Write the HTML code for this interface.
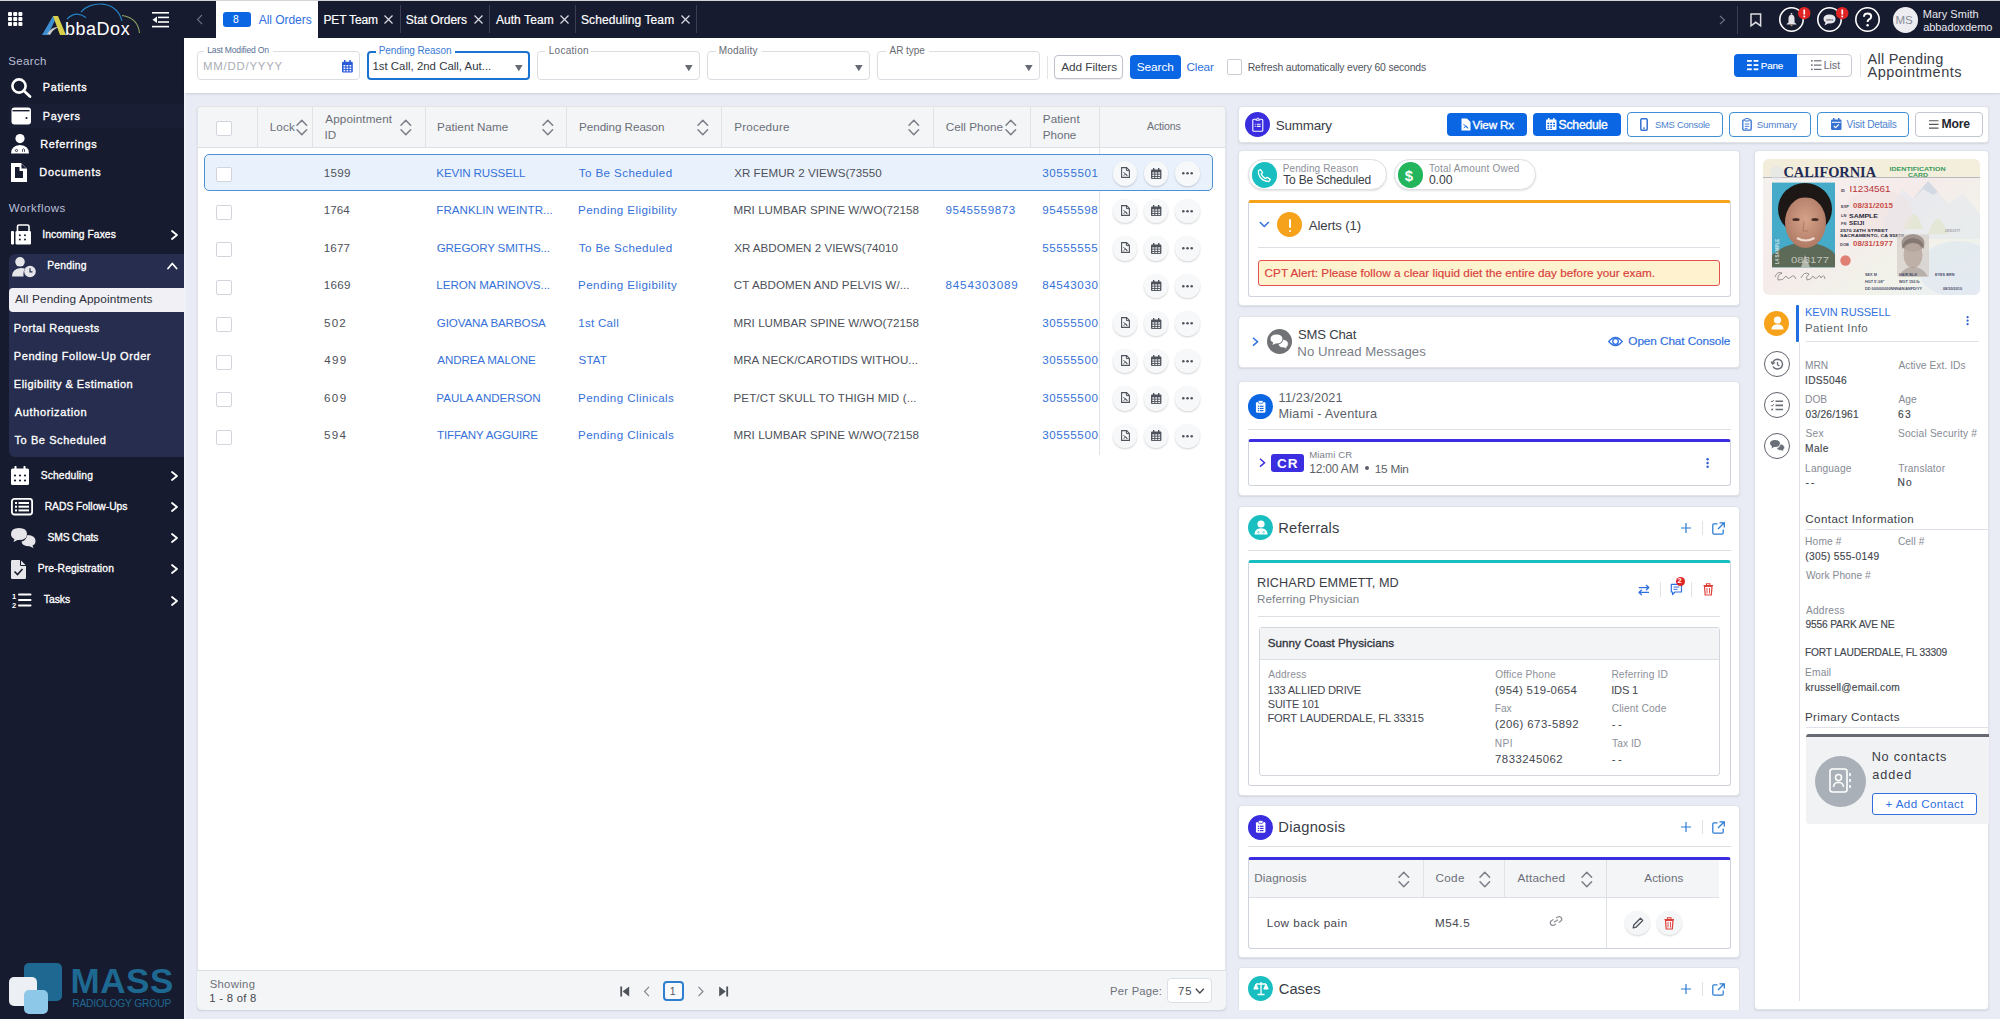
<!DOCTYPE html>
<html><head><meta charset="utf-8"><title>AbbaDox</title>
<style>
*{box-sizing:border-box;margin:0;padding:0}
html,body{width:2000px;height:1019px;overflow:hidden;background:#e9ecf4;font-family:"Liberation Sans",sans-serif;}
.t{position:absolute;line-height:1;white-space:nowrap;}
.a{position:absolute;}
svg{position:absolute;overflow:visible}
</style></head><body>
<div class="a" style="left:0px;top:0px;width:2000px;height:1019px;background:#e9ecf4"></div>
<div class="a" style="left:0px;top:0px;width:2000px;height:1px;background:#d4d4d8"></div>
<div class="a" style="left:0px;top:1px;width:2000px;height:37px;background:#171b2f"></div>
<div class="a" style="left:0px;top:1px;width:184px;height:1018px;background:#171b2f"></div>
<div class="a" style="left:184px;top:38px;width:1816px;height:55px;background:#fff;box-shadow:0 1px 2px rgba(0,0,0,.12)"></div>
<div class="a" style="left:216px;top:1px;width:102px;height:37px;background:#fff"></div>
<div class="a" style="left:197px;top:106px;width:1029px;height:903.5px;background:#fff;border-radius:4px;border:1px solid #e2e4e9;box-shadow:0 1px 2px rgba(0,0,0,.12)"></div>
<div class="a" style="left:1238px;top:106px;width:751px;height:37px;background:#fff;border-radius:4px;border:1px solid #e0e3e9;box-shadow:0 1px 2px rgba(0,0,0,.10)"></div>
<div class="a" style="left:1238px;top:150px;width:502px;height:156px;background:#fff;border-radius:4px;border:1px solid #e0e3e9;box-shadow:0 1px 2px rgba(0,0,0,.10)"></div>
<div class="a" style="left:1238px;top:316px;width:502px;height:52px;background:#fff;border-radius:4px;border:1px solid #e0e3e9;box-shadow:0 1px 2px rgba(0,0,0,.10)"></div>
<div class="a" style="left:1238px;top:381px;width:502px;height:115px;background:#fff;border-radius:4px;border:1px solid #e0e3e9;box-shadow:0 1px 2px rgba(0,0,0,.10)"></div>
<div class="a" style="left:1238px;top:506px;width:502px;height:290px;background:#fff;border-radius:4px;border:1px solid #e0e3e9;box-shadow:0 1px 2px rgba(0,0,0,.10)"></div>
<div class="a" style="left:1238px;top:805px;width:502px;height:153px;background:#fff;border-radius:4px;border:1px solid #e0e3e9;box-shadow:0 1px 2px rgba(0,0,0,.10)"></div>
<div class="a" style="left:1238px;top:967px;width:502px;height:43px;background:#fff;border-radius:4px 4px 0 0;border:1px solid #e0e3e9;border-bottom:none"></div>
<div class="a" style="left:1754px;top:150px;width:235px;height:860px;background:#fff;border-radius:4px;border:1px solid #e0e3e9;box-shadow:0 1px 2px rgba(0,0,0,.10)"></div>
<div class="a" style="left:184px;top:93px;width:2px;height:926px;background:#f0f1f6"></div>
<svg style="left:8px;top:12px;" width="15" height="15" viewBox="0 0 15 15"><rect x="0.0" y="0.0" width="4" height="4" rx="1" fill="#fff"/><rect x="5.2" y="0.0" width="4" height="4" rx="1" fill="#fff"/><rect x="10.4" y="0.0" width="4" height="4" rx="1" fill="#fff"/><rect x="0.0" y="5.0" width="4" height="4" rx="1" fill="#fff"/><rect x="5.2" y="5.0" width="4" height="4" rx="1" fill="#fff"/><rect x="10.4" y="5.0" width="4" height="4" rx="1" fill="#fff"/><rect x="0.0" y="10.0" width="4" height="4" rx="1" fill="#fff"/><rect x="5.2" y="10.0" width="4" height="4" rx="1" fill="#fff"/><rect x="10.4" y="10.0" width="4" height="4" rx="1" fill="#fff"/></svg>
<svg style="left:40px;top:2px;" width="102" height="36" viewBox="0 0 102 36">
      <path d="M2 33 L13 14 L17 14 L8 33 Z" fill="#3d8fd1"/>
      <path d="M13 14 L18 14 L26 33 L20 33 Z" fill="#d7cf4a"/>
      <path d="M7 32 Q12 24 19 25 Q13 27 10 33 Z" fill="#c8c8c8"/>
      <path d="M27 17 Q36 8 46 15.5" stroke="#2482c4" stroke-width="1.2" fill="none"/>
      <path d="M41 10 C50 -1 76 -3 82 19" stroke="#2482c4" stroke-width="1.2" fill="none"/>
      <path d="M82 13.5 Q98 16 99.5 31" stroke="#8fa060" stroke-width="1.1" fill="none"/>
    </svg>
<div class="t" style="left:64.92px;top:20.00px;font-size:18px;color:#ffffff;letter-spacing:0.544px;">bbaDox</div>
<svg style="left:152px;top:12px;" width="18" height="16" viewBox="0 0 18 16">
      <rect x="0" y="0" width="17" height="1.6" fill="#fff"/>
      <rect x="6" y="4.6" width="11" height="1.6" fill="#fff"/>
      <rect x="6" y="9.2" width="11" height="1.6" fill="#fff"/>
      <rect x="0" y="13.8" width="17" height="1.6" fill="#fff"/>
      <path d="M0.5 7.7 L5 4.5 L5 10.9 Z" fill="#fff"/>
    </svg>
<div class="t" style="left:8.14px;top:56.00px;font-size:11.5px;color:#b7bfd6;letter-spacing:0.374px;">Search</div>
<div class="a" style="left:9px;top:104px;width:175px;height:24px;background:#191e35"></div>
<svg style="left:11px;top:78px;" width="21" height="20" viewBox="0 0 21 20">
      <circle cx="8" cy="8" r="6.6" stroke="#fff" stroke-width="2.6" fill="none"/>
      <path d="M12.8 12.8 L19 18.6" stroke="#fff" stroke-width="2.8" stroke-linecap="round"/>
    </svg>
<div class="t" style="left:42.83px;top:82.00px;font-size:10.9px;color:#ffffff;-webkit-text-stroke:0.33px #ffffff;letter-spacing:0.631px;">Patients</div>
<svg style="left:11px;top:107px;" width="21" height="18" viewBox="0 0 21 18">
      <rect x="0.5" y="0.5" width="19.5" height="17" rx="3" fill="#fff"/>
      <rect x="1.5" y="3" width="17" height="1.4" fill="#171b2f"/>
      <circle cx="15.5" cy="11" r="1.1" fill="#171b2f"/>
    </svg>
<div class="t" style="left:42.73px;top:111.00px;font-size:10.9px;color:#ffffff;-webkit-text-stroke:0.33px #ffffff;letter-spacing:0.675px;">Payers</div>
<svg style="left:11px;top:134px;" width="18" height="20" viewBox="0 0 18 20">
      <circle cx="9" cy="4.6" r="4.6" fill="#fff"/>
      <path d="M0 19.5 Q0 11.5 9 11 Q18 11.5 18 19.5 Z" fill="#fff"/>
      <circle cx="5.5" cy="16.5" r="1.1" fill="none" stroke="#171b2f" stroke-width=".8"/>
      <path d="M11.5 17.8 L11.5 15.5 Q12.5 14 13.5 15.5 L13.5 17.8" fill="none" stroke="#171b2f" stroke-width=".8"/>
    </svg>
<div class="t" style="left:40.23px;top:139.00px;font-size:10.9px;color:#ffffff;-webkit-text-stroke:0.33px #ffffff;letter-spacing:0.680px;">Referrings</div>
<svg style="left:11px;top:163px;" width="17" height="20" viewBox="0 0 17 20">
      <path d="M0 0 L10 0 L16 6 L16 19 L0 19 Z" fill="#fff"/>
      <path d="M4 4 L8.5 4 L8.5 8 L12 8 L12 15 L4 15 Z" fill="#171b2f"/>
      <path d="M10.5 0.8 L15.2 5.5 L10.5 5.5 Z" fill="#171b2f"/>
    </svg>
<div class="t" style="left:39.33px;top:167.00px;font-size:10.9px;color:#ffffff;-webkit-text-stroke:0.33px #ffffff;letter-spacing:0.784px;">Documents</div>
<div class="t" style="left:8.80px;top:203.00px;font-size:11.5px;color:#b7bfd6;letter-spacing:0.465px;">Workflows</div>
<svg style="left:11px;top:225px;" width="21" height="20" viewBox="0 0 21 20">
      <rect x="0" y="6" width="3" height="13.5" rx="1" fill="#fff"/>
      <rect x="4.5" y="6" width="15.5" height="13.5" rx="1.2" fill="#fff"/>
      <path d="M6.5 6 L6.5 1.5 Q6.5 0 8 0 L16.5 0 Q18 0 18 1.5 L18 6" fill="none" stroke="#fff" stroke-width="1.6"/>
      <circle cx="8.8" cy="10.3" r="1" fill="#171b2f"/><circle cx="14" cy="10.3" r="1" fill="#171b2f"/>
      <circle cx="8.8" cy="14.5" r="1" fill="#171b2f"/><circle cx="14" cy="14.5" r="1" fill="#171b2f"/>
    </svg>
<div class="t" style="left:42.27px;top:230.00px;font-size:10.3px;color:#ffffff;-webkit-text-stroke:0.31px #ffffff;letter-spacing:0.064px;">Incoming Faxes</div>
<svg style="left:170.5px;top:230px;" width="8" height="11" viewBox="0 0 8 11"><path d="M1 1 L6 5 L1 9" stroke="#fff" stroke-width="1.8" fill="none" stroke-linecap="round" stroke-linejoin="round"/></svg>
<div class="a" style="left:9px;top:254px;width:175px;height:203px;background:#262d4e;border-radius:6px 0 0 6px"></div>
<svg style="left:11.5px;top:256.5px;" width="25" height="20" viewBox="0 0 25 20">
      <circle cx="8" cy="4.8" r="4.8" fill="#e6e6ea"/>
      <path d="M0 19.5 Q0 11.5 9 11 L13 11.5 Q11 14 11.5 19.5 Z" fill="#e6e6ea"/>
      <circle cx="18" cy="14.5" r="5.8" fill="#e6e6ea"/>
      <path d="M18 11.3 L18 14.8 L20.5 14.8" stroke="#262d4e" stroke-width="1.2" fill="none"/>
    </svg>
<div class="t" style="left:47.18px;top:261.00px;font-size:10.3px;color:#ffffff;-webkit-text-stroke:0.31px #ffffff;letter-spacing:0.234px;">Pending</div>
<svg style="left:166.5px;top:262px;" width="11" height="8" viewBox="0 0 11 8"><path d="M1 6.5 L5.3 1.5 L9.6 6.5" stroke="#fff" stroke-width="1.8" fill="none" stroke-linecap="round" stroke-linejoin="round"/></svg>
<div class="a" style="left:8.6px;top:287.5px;width:175.4px;height:24.80000000000001px;background:#f0f0f5;border-radius:4px 0 0 4px"></div>
<div class="t" style="left:15.10px;top:294.00px;font-size:11.8px;color:#2d2f3a;letter-spacing:0.127px;">All Pending Appointments</div>
<div class="t" style="left:13.82px;top:323.00px;font-size:11px;color:#ffffff;-webkit-text-stroke:0.33px #ffffff;letter-spacing:0.511px;">Portal Requests</div>
<div class="t" style="left:13.82px;top:351.00px;font-size:11px;color:#ffffff;-webkit-text-stroke:0.33px #ffffff;letter-spacing:0.573px;">Pending Follow-Up Order</div>
<div class="t" style="left:13.82px;top:379.00px;font-size:11px;color:#ffffff;-webkit-text-stroke:0.33px #ffffff;letter-spacing:0.487px;">Eligibility &amp; Estimation</div>
<div class="t" style="left:14.70px;top:407.00px;font-size:11px;color:#ffffff;-webkit-text-stroke:0.33px #ffffff;letter-spacing:0.651px;">Authorization</div>
<div class="t" style="left:14.48px;top:435.00px;font-size:11px;color:#ffffff;-webkit-text-stroke:0.33px #ffffff;letter-spacing:0.583px;">To Be Scheduled</div>
<svg style="left:11.3px;top:466px;" width="18" height="19" viewBox="0 0 18 19">
      <rect x="0" y="2.5" width="18" height="16.5" rx="1.5" fill="#fff"/>
      <rect x="3.5" y="0" width="2" height="4" rx=".6" fill="#fff"/>
      <rect x="12.5" y="0" width="2" height="4" rx=".6" fill="#fff"/>
      <g fill="#171b2f"><circle cx="4" cy="9.5" r="1.1"/><circle cx="9" cy="9.5" r="1.1"/><circle cx="14" cy="9.5" r="1.1"/>
      <circle cx="4" cy="14.5" r="1.1"/><circle cx="9" cy="14.5" r="1.1"/><circle cx="14" cy="14.5" r="1.1"/></g>
    </svg>
<div class="t" style="left:40.69px;top:471.00px;font-size:10.3px;color:#ffffff;-webkit-text-stroke:0.31px #ffffff;letter-spacing:0.136px;">Scheduling</div>
<svg style="left:170.8px;top:471px;" width="8" height="11" viewBox="0 0 8 11"><path d="M1 1 L6 5 L1 9" stroke="#fff" stroke-width="1.8" fill="none" stroke-linecap="round" stroke-linejoin="round"/></svg>
<svg style="left:11.3px;top:498px;" width="23" height="18" viewBox="0 0 23 18">
      <rect x="0.9" y="0.9" width="20.2" height="15.6" rx="2.5" fill="none" stroke="#fff" stroke-width="1.8"/>
      <g fill="#fff"><rect x="4" y="4" width="2" height="2"/><rect x="4" y="7.7" width="2" height="2"/><rect x="4" y="11.4" width="2" height="2"/>
      <rect x="7.5" y="4" width="10.5" height="2"/><rect x="7.5" y="7.7" width="10.5" height="2"/><rect x="7.5" y="11.4" width="10.5" height="2"/></g>
    </svg>
<div class="t" style="left:44.68px;top:502.00px;font-size:10.3px;color:#ffffff;-webkit-text-stroke:0.31px #ffffff;letter-spacing:-0.011px;">RADS Follow-Ups</div>
<svg style="left:170.8px;top:502px;" width="8" height="11" viewBox="0 0 8 11"><path d="M1 1 L6 5 L1 9" stroke="#fff" stroke-width="1.8" fill="none" stroke-linecap="round" stroke-linejoin="round"/></svg>
<svg style="left:11.3px;top:528px;" width="25" height="20" viewBox="0 0 25 20">
      <path d="M8 0 Q16 0 16 6 Q16 12 8 12 L6.5 12 L2.5 14 L3.5 11 Q0 9.5 0 6 Q0 0 8 0 Z" fill="#e6e6ea"/>
      <path d="M16.5 7 Q24.5 7.5 24.5 13 Q24.5 16.5 21.5 17.5 L22.5 20 L18.5 18.3 Q11 18.3 10.5 13.5 Q14.5 13 16.5 7 Z" fill="#e6e6ea"/>
    </svg>
<div class="t" style="left:47.49px;top:533.00px;font-size:10.3px;color:#ffffff;-webkit-text-stroke:0.31px #ffffff;letter-spacing:-0.146px;">SMS Chats</div>
<svg style="left:170.8px;top:533px;" width="8" height="11" viewBox="0 0 8 11"><path d="M1 1 L6 5 L1 9" stroke="#fff" stroke-width="1.8" fill="none" stroke-linecap="round" stroke-linejoin="round"/></svg>
<svg style="left:11.3px;top:560px;" width="16" height="19" viewBox="0 0 16 19">
      <path d="M0 1.2 Q0 0 1.2 0 L9.5 0 L15 5.5 L15 17.8 Q15 19 13.8 19 L1.2 19 Q0 19 0 17.8 Z" fill="#e6e6ea"/>
      <path d="M9.5 0 L9.5 5.5 L15 5.5" fill="none" stroke="#171b2f" stroke-width="1"/>
      <path d="M3.5 11.5 L6.5 14.5 L11.5 9" stroke="#171b2f" stroke-width="1.6" fill="none"/>
    </svg>
<div class="t" style="left:37.68px;top:564.00px;font-size:10.3px;color:#ffffff;-webkit-text-stroke:0.31px #ffffff;letter-spacing:0.119px;">Pre-Registration</div>
<svg style="left:170.8px;top:564px;" width="8" height="11" viewBox="0 0 8 11"><path d="M1 1 L6 5 L1 9" stroke="#fff" stroke-width="1.8" fill="none" stroke-linecap="round" stroke-linejoin="round"/></svg>
<svg style="left:11.8px;top:592px;" width="20" height="16" viewBox="0 0 20 16">
      <text x="0" y="7" font-size="7.5" font-weight="700" fill="#fff" font-family="Liberation Sans">1</text>
      <text x="0" y="15.5" font-size="7.5" font-weight="700" fill="#fff" font-family="Liberation Sans">2</text>
      <rect x="6" y="1.5" width="13.5" height="2" rx="1" fill="#fff"/>
      <rect x="6" y="7" width="13.5" height="2" rx="1" fill="#fff"/>
      <rect x="6" y="12.5" width="13.5" height="2" rx="1" fill="#fff"/>
    </svg>
<div class="t" style="left:43.79px;top:595.00px;font-size:10.3px;color:#ffffff;-webkit-text-stroke:0.31px #ffffff;letter-spacing:0.022px;">Tasks</div>
<svg style="left:170.8px;top:596px;" width="8" height="11" viewBox="0 0 8 11"><path d="M1 1 L6 5 L1 9" stroke="#fff" stroke-width="1.8" fill="none" stroke-linecap="round" stroke-linejoin="round"/></svg>
<div class="a" style="left:23.5px;top:962.5px;width:38.5px;height:38.0px;background:#1e6891;border-radius:5px"></div>
<div class="a" style="left:8.6px;top:977px;width:28.9px;height:28.5px;background:#eceff3;border-radius:5px"></div>
<div class="a" style="left:23.5px;top:990px;width:24.5px;height:23.5px;background:#8ec8e8;border-radius:5px"></div>
<div class="t" style="left:70.40px;top:963.00px;font-size:35px;color:#1e6991;font-weight:700;letter-spacing:0.591px;">MASS</div>
<div class="t" style="left:72.18px;top:999.00px;font-size:10.3px;color:#1e6991;letter-spacing:-0.183px;">RADIOLOGY GROUP</div>
<svg style="left:196px;top:14px;" width="8" height="12" viewBox="0 0 8 12"><path d="M6 1 L1.5 5.5 L6 10" stroke="#6c7186" stroke-width="1.1" fill="none"/></svg>
<div class="a" style="left:222.5px;top:12px;width:28.0px;height:15px;background:#0b66e4;border-radius:3px"></div>
<div class="t" style="left:233.08px;top:15.00px;font-size:10.4px;color:#fff;">8</div>
<div class="t" style="left:258.80px;top:14.00px;font-size:12px;color:#2f6fe0;letter-spacing:-0.054px;">All Orders</div>
<div class="t" style="left:323.54px;top:14.00px;font-size:12px;color:#ffffff;-webkit-text-stroke:0.18px #ffffff;letter-spacing:-0.171px;">PET Team</div>
<svg style="left:384.4px;top:15px;" width="9" height="9" viewBox="0 0 9 9"><path d="M0.5 0.5 L8.5 8.5 M8.5 0.5 L0.5 8.5" stroke="#d9dbe3" stroke-width="1.2"/></svg>
<div class="a" style="left:400px;top:5px;width:1px;height:28px;background:#3a3f55"></div>
<div class="t" style="left:405.82px;top:14.00px;font-size:12px;color:#ffffff;-webkit-text-stroke:0.18px #ffffff;letter-spacing:-0.011px;">Stat Orders</div>
<svg style="left:474.3px;top:15px;" width="9" height="9" viewBox="0 0 9 9"><path d="M0.5 0.5 L8.5 8.5 M8.5 0.5 L0.5 8.5" stroke="#d9dbe3" stroke-width="1.2"/></svg>
<div class="a" style="left:489.2px;top:5px;width:1.0px;height:28px;background:#3a3f55"></div>
<div class="t" style="left:495.90px;top:14.00px;font-size:12px;color:#ffffff;-webkit-text-stroke:0.18px #ffffff;letter-spacing:0.074px;">Auth Team</div>
<svg style="left:559.9px;top:15px;" width="9" height="9" viewBox="0 0 9 9"><path d="M0.5 0.5 L8.5 8.5 M8.5 0.5 L0.5 8.5" stroke="#d9dbe3" stroke-width="1.2"/></svg>
<div class="a" style="left:575px;top:5px;width:1px;height:28px;background:#3a3f55"></div>
<div class="t" style="left:581.02px;top:14.00px;font-size:12px;color:#ffffff;-webkit-text-stroke:0.18px #ffffff;letter-spacing:0.091px;">Scheduling Team</div>
<svg style="left:680.9px;top:15px;" width="9" height="9" viewBox="0 0 9 9"><path d="M0.5 0.5 L8.5 8.5 M8.5 0.5 L0.5 8.5" stroke="#d9dbe3" stroke-width="1.2"/></svg>
<div class="a" style="left:695.7px;top:5px;width:1.0px;height:28px;background:#3a3f55"></div>
<svg style="left:1719px;top:15px;" width="7" height="10" viewBox="0 0 7 10"><path d="M1 1 L5.5 5 L1 9" stroke="#6c7186" stroke-width="1.1" fill="none"/></svg>
<div class="a" style="left:1737px;top:6px;width:1px;height:28px;background:#3a3f55"></div>
<svg style="left:1750px;top:12.5px;" width="12" height="14" viewBox="0 0 12 14"><path d="M1 0.9 L10.6 0.9 L10.6 12.8 L5.8 9.3 L1 12.8 Z" stroke="#dcdce2" stroke-width="1.5" fill="none" stroke-linejoin="miter"/></svg>
<svg style="left:1779px;top:7px;" width="26" height="26" viewBox="0 0 26 26">
      <circle cx="12.5" cy="12.5" r="11.7" stroke="#fff" stroke-width="1.6" fill="none"/>
      <path d="M9.5 15.5 L9.5 11.5 Q9.5 8 12.5 7.8 Q15.5 8 15.5 11.5 L15.5 15.5 Q17 16.3 17.6 17.5 L7.4 17.5 Q8 16.3 9.5 15.5 Z" fill="#e2e2e8"/>
      <circle cx="12.5" cy="6.8" r="0.9" fill="#e2e2e8"/>
      <path d="M11.2 18.3 Q12.5 20.2 13.8 18.3 Z" fill="#f0b070"/>
    </svg>
<svg style="left:1798px;top:7px;" width="13" height="13" viewBox="0 0 13 13"><circle cx="6.2" cy="6.2" r="6.2" fill="#e02424"/><rect x="5.4" y="2.5" width="1.7" height="5" fill="#fff"/><rect x="5.4" y="8.6" width="1.7" height="1.7" fill="#fff"/></svg>
<svg style="left:1816.5px;top:7px;" width="26" height="26" viewBox="0 0 26 26">
      <circle cx="12.5" cy="12.5" r="11.7" stroke="#fff" stroke-width="1.6" fill="none"/>
      <path d="M12.5 7.5 Q18.5 7.5 18.5 12 Q18.5 16.5 12.5 16.5 L11 16.5 L7.5 18.5 L8.5 15.5 Q6.5 14.3 6.5 12 Q6.5 7.5 12.5 7.5 Z" fill="#e8e8ec"/>
      <text x="9" y="13.5" font-size="4" fill="#171b2f" font-family="Liberation Sans">sms</text>
    </svg>
<svg style="left:1836px;top:7px;" width="13" height="13" viewBox="0 0 13 13"><circle cx="6.2" cy="6.2" r="6.2" fill="#e02424"/><rect x="5.4" y="2.5" width="1.7" height="5" fill="#fff"/><rect x="5.4" y="8.6" width="1.7" height="1.7" fill="#fff"/></svg>
<svg style="left:1854.5px;top:7px;" width="26" height="26" viewBox="0 0 26 26">
      <circle cx="12.5" cy="12.5" r="11.7" stroke="#fff" stroke-width="1.6" fill="none"/>
      <path d="M9 9.8 Q9 6.5 12.6 6.5 Q16.2 6.5 16.2 9.6 Q16.2 11.5 13.8 12.6 Q12.6 13.2 12.6 15" stroke="#fff" stroke-width="2" fill="none"/>
      <circle cx="12.6" cy="18.2" r="1.25" fill="#fff"/>
    </svg>
<div class="a" style="left:1892.5px;top:7px;width:25.5px;height:25.5px;background:#ececf1;border-radius:50%"></div>
<div class="t" style="left:1895.38px;top:15.00px;font-size:11.5px;color:#8a8d99;">MS</div>
<div class="t" style="left:1922.72px;top:9.00px;font-size:11px;color:#e7e8ee;letter-spacing:0.031px;">Mary Smith</div>
<div class="t" style="left:1923.16px;top:22.00px;font-size:11px;color:#e7e8ee;letter-spacing:-0.048px;">abbadoxdemo</div>
<div class="a" style="left:197px;top:51.3px;width:163px;height:29.0px;border:1px solid #dcdde2;border-radius:4px;background:#fff"></div>
<div class="a" style="left:204px;top:46px;width:68.60000000000002px;height:8px;background:#fff"></div>
<div class="t" style="left:207.31px;top:46.00px;font-size:8.6px;color:#5a6f94;letter-spacing:-0.216px;">Last Modified On</div>
<div class="t" style="left:203.09px;top:61.00px;font-size:11.4px;color:#a9adb6;letter-spacing:0.766px;">MM/DD/YYYY</div>
<svg style="left:342px;top:59.5px;" width="11" height="13" viewBox="0 0 11 13">
      <rect x="0" y="1.8" width="10.8" height="10.6" rx="1.2" fill="#2a5bd7"/>
      <rect x="2" y="0" width="1.5" height="3" fill="#2a5bd7"/><rect x="7.3" y="0" width="1.5" height="3" fill="#2a5bd7"/>
      <g fill="#fff"><rect x="1.5" y="5" width="1.8" height="1.5"/><rect x="4.5" y="5" width="1.8" height="1.5"/><rect x="7.5" y="5" width="1.8" height="1.5"/>
      <rect x="1.5" y="7.6" width="1.8" height="1.5"/><rect x="4.5" y="7.6" width="1.8" height="1.5"/><rect x="7.5" y="7.6" width="1.8" height="1.5"/>
      <rect x="1.5" y="10.1" width="1.8" height="1.3"/><rect x="4.5" y="10.1" width="1.8" height="1.3"/><rect x="7.5" y="10.1" width="1.8" height="1.3"/></g>
    </svg>
<div class="a" style="left:367px;top:51.3px;width:163px;height:29.0px;border:2px solid #1a73d1;border-radius:4px;background:#fff"></div>
<div class="a" style="left:375.6px;top:46px;width:79.30000000000001px;height:8px;background:#fff"></div>
<div class="t" style="left:378.80px;top:46.00px;font-size:10px;color:#3a7bd5;letter-spacing:-0.099px;">Pending Reason</div>
<div class="t" style="left:372.40px;top:61.00px;font-size:11.4px;color:#333740;letter-spacing:0.019px;">1st Call, 2nd Call, Aut...</div>
<svg style="left:515px;top:65px;" width="8" height="7" viewBox="0 0 8 7"><path d="M0 0 L7.6 0 L3.8 6.2 Z" fill="#666a73"/></svg>
<div class="a" style="left:537px;top:51.3px;width:162.5px;height:29.0px;border:1px solid #dcdde2;border-radius:4px;background:#fff"></div>
<div class="a" style="left:545px;top:46px;width:46px;height:8px;background:#fff"></div>
<div class="t" style="left:548.70px;top:46.00px;font-size:10px;color:#676b75;letter-spacing:0.293px;">Location</div>
<svg style="left:685px;top:65px;" width="8" height="7" viewBox="0 0 8 7"><path d="M0 0 L7.6 0 L3.8 6.2 Z" fill="#666a73"/></svg>
<div class="a" style="left:707px;top:51.3px;width:163px;height:29.0px;border:1px solid #dcdde2;border-radius:4px;background:#fff"></div>
<div class="a" style="left:715.5px;top:46px;width:46.0px;height:8px;background:#fff"></div>
<div class="t" style="left:718.70px;top:46.00px;font-size:10px;color:#676b75;letter-spacing:0.223px;">Modality</div>
<svg style="left:855px;top:65px;" width="8" height="7" viewBox="0 0 8 7"><path d="M0 0 L7.6 0 L3.8 6.2 Z" fill="#666a73"/></svg>
<div class="a" style="left:877px;top:51.3px;width:163px;height:29.0px;border:1px solid #dcdde2;border-radius:4px;background:#fff"></div>
<div class="a" style="left:885.5px;top:46px;width:43.0px;height:8px;background:#fff"></div>
<div class="t" style="left:889.50px;top:46.00px;font-size:10px;color:#676b75;letter-spacing:-0.035px;">AR type</div>
<svg style="left:1025px;top:65px;" width="8" height="7" viewBox="0 0 8 7"><path d="M0 0 L7.6 0 L3.8 6.2 Z" fill="#666a73"/></svg>
<div class="a" style="left:1047px;top:55.5px;width:1px;height:23.0px;background:#e3e4e8"></div>
<div class="a" style="left:1053.7px;top:55.4px;width:69.29999999999995px;height:23.6px;border:1px solid #bfc3cc;border-radius:4px;background:#fff;box-shadow:0 1px 1px rgba(0,0,0,.08)"></div>
<div class="t" style="left:1061.30px;top:62.00px;font-size:11.8px;color:#3b3f48;letter-spacing:-0.054px;">Add Filters</div>
<div class="a" style="left:1129.8px;top:55.4px;width:50.799999999999955px;height:23.6px;background:#0b66e4;border-radius:4px"></div>
<div class="t" style="left:1136.73px;top:62.00px;font-size:11.8px;color:#fff;letter-spacing:-0.051px;">Search</div>
<div class="t" style="left:1186.41px;top:62.00px;font-size:11.8px;color:#2f6fe0;letter-spacing:-0.164px;">Clear</div>
<div class="a" style="left:1227px;top:59.4px;width:15.400000000000091px;height:15.199999999999996px;border:1px solid #c9ccd3;border-radius:2px;background:#fff"></div>
<div class="t" style="left:1247.77px;top:63.00px;font-size:10.4px;color:#50545e;letter-spacing:-0.158px;">Refresh automatically every 60 seconds</div>
<div class="a" style="left:1734px;top:54px;width:118.40000000000009px;height:23.400000000000006px;border:1px solid #c6cad3;border-radius:4px;background:#fff"></div>
<div class="a" style="left:1734px;top:54px;width:62.59999999999991px;height:23.400000000000006px;background:#0b66e4;border-radius:4px 0 0 4px"></div>
<svg style="left:1747px;top:60px;" width="12" height="11" viewBox="0 0 12 11"><g fill="#fff"><rect x="0" y="0" width="4.8" height="1.8"/><rect x="0" y="4.2" width="4.8" height="1.8"/><rect x="0" y="8.4" width="4.8" height="1.8"/>
      <rect x="6.6" y="0" width="4.8" height="1.8"/><rect x="6.6" y="4.2" width="4.8" height="1.8"/><rect x="6.6" y="8.4" width="4.8" height="1.8"/></g></svg>
<div class="t" style="left:1760.81px;top:61.00px;font-size:9.9px;color:#fff;-webkit-text-stroke:0.15px #fff;letter-spacing:-0.190px;">Pane</div>
<svg style="left:1810.5px;top:60px;" width="13" height="11" viewBox="0 0 13 11"><g fill="#6d717b"><rect x="0" y="0" width="1.6" height="1.6"/><rect x="0" y="4.3" width="1.6" height="1.6"/><rect x="0" y="8.6" width="1.6" height="1.6"/>
      <rect x="3" y="0.2" width="7.5" height="1.2"/><rect x="3" y="4.5" width="7.5" height="1.2"/><rect x="3" y="8.8" width="7.5" height="1.2"/></g></svg>
<div class="t" style="left:1823.70px;top:61.00px;font-size:10px;color:#6d717b;-webkit-text-stroke:0.15px #6d717b;letter-spacing:0.239px;">List</div>
<div class="a" style="left:1860px;top:54px;width:1px;height:23px;background:#e3e4e8"></div>
<div class="t" style="left:1867.60px;top:52.00px;font-size:14.5px;color:#3a3d46;letter-spacing:0.226px;">All Pending</div>
<div class="t" style="left:1867.60px;top:65.00px;font-size:14.5px;color:#3a3d46;letter-spacing:0.470px;">Appointments</div>
<div class="a" style="left:197px;top:106px;width:1029px;height:42px;background:#f4f5f7;border-radius:4px 4px 0 0;border:1px solid #e2e4e9;border-bottom:1px solid #dcdfe4"></div>
<div class="a" style="left:257px;top:107px;width:1px;height:40px;background:#e0e2e7"></div>
<div class="a" style="left:312px;top:107px;width:1px;height:40px;background:#e0e2e7"></div>
<div class="a" style="left:424.5px;top:107px;width:1.0px;height:40px;background:#e0e2e7"></div>
<div class="a" style="left:566px;top:107px;width:1px;height:40px;background:#e0e2e7"></div>
<div class="a" style="left:721px;top:107px;width:1px;height:40px;background:#e0e2e7"></div>
<div class="a" style="left:932.5px;top:107px;width:1.0px;height:40px;background:#e0e2e7"></div>
<div class="a" style="left:1030px;top:107px;width:1px;height:40px;background:#e0e2e7"></div>
<div class="a" style="left:1098.8px;top:107px;width:1.0px;height:347.5px;background:#dfe2e8"></div>
<div class="a" style="left:216.3px;top:120.6px;width:15.5px;height:15.300000000000011px;border:1px solid #d2d5db;border-radius:2px;background:#fff"></div>
<div class="t" style="left:269.66px;top:121.00px;font-size:11.7px;color:#6b6f78;letter-spacing:0.202px;">Lock</div>
<svg style="left:296.3px;top:119px;" width="12" height="17" viewBox="0 0 12 17"><path d="M1 6.3 L5.8 1.2 L10.6 6.3 M1 10.7 L5.8 15.8 L10.6 10.7" stroke="#7b7f88" stroke-width="1.5" fill="none" stroke-linejoin="round" stroke-linecap="round"/></svg>
<div class="t" style="left:325.30px;top:113.00px;font-size:11.7px;color:#6b6f78;letter-spacing:0.108px;">Appointment</div>
<div class="t" style="left:324.45px;top:129.00px;font-size:11.7px;color:#6b6f78;">ID</div>
<svg style="left:400px;top:119px;" width="12" height="17" viewBox="0 0 12 17"><path d="M1 6.3 L5.8 1.2 L10.6 6.3 M1 10.7 L5.8 15.8 L10.6 10.7" stroke="#7b7f88" stroke-width="1.5" fill="none" stroke-linejoin="round" stroke-linecap="round"/></svg>
<div class="t" style="left:437.06px;top:121.00px;font-size:11.7px;color:#6b6f78;letter-spacing:0.043px;">Patient Name</div>
<svg style="left:541.8px;top:119px;" width="12" height="17" viewBox="0 0 12 17"><path d="M1 6.3 L5.8 1.2 L10.6 6.3 M1 10.7 L5.8 15.8 L10.6 10.7" stroke="#7b7f88" stroke-width="1.5" fill="none" stroke-linejoin="round" stroke-linecap="round"/></svg>
<div class="t" style="left:579.06px;top:121.00px;font-size:11.7px;color:#6b6f78;letter-spacing:-0.071px;">Pending Reason</div>
<svg style="left:696.8px;top:119px;" width="12" height="17" viewBox="0 0 12 17"><path d="M1 6.3 L5.8 1.2 L10.6 6.3 M1 10.7 L5.8 15.8 L10.6 10.7" stroke="#7b7f88" stroke-width="1.5" fill="none" stroke-linejoin="round" stroke-linecap="round"/></svg>
<div class="t" style="left:734.16px;top:121.00px;font-size:11.7px;color:#6b6f78;letter-spacing:0.185px;">Procedure</div>
<svg style="left:908.4px;top:119px;" width="12" height="17" viewBox="0 0 12 17"><path d="M1 6.3 L5.8 1.2 L10.6 6.3 M1 10.7 L5.8 15.8 L10.6 10.7" stroke="#7b7f88" stroke-width="1.5" fill="none" stroke-linejoin="round" stroke-linecap="round"/></svg>
<div class="t" style="left:945.81px;top:121.00px;font-size:11.7px;color:#6b6f78;letter-spacing:-0.003px;">Cell Phone</div>
<svg style="left:1005.4px;top:119px;" width="12" height="17" viewBox="0 0 12 17"><path d="M1 6.3 L5.8 1.2 L10.6 6.3 M1 10.7 L5.8 15.8 L10.6 10.7" stroke="#7b7f88" stroke-width="1.5" fill="none" stroke-linejoin="round" stroke-linecap="round"/></svg>
<div class="t" style="left:1042.76px;top:113.00px;font-size:11.7px;color:#6b6f78;letter-spacing:0.081px;">Patient</div>
<div class="t" style="left:1042.76px;top:129.00px;font-size:11.7px;color:#6b6f78;letter-spacing:-0.043px;">Phone</div>
<div class="t" style="left:1147.00px;top:121.00px;font-size:10.6px;color:#6b6f78;letter-spacing:-0.174px;">Actions</div>
<div class="a" style="left:203.5px;top:154.4px;width:1009.5px;height:37.099999999999994px;background:#e9f1fd;border:1px solid #4b92d6;border-radius:5px"></div>
<div class="a" style="left:216.3px;top:167.20000000000002px;width:15.5px;height:15.300000000000011px;border:1px solid #d2d5db;border-radius:2px;background:#fff"></div>
<div class="t" style="left:323.69px;top:167.00px;font-size:11.6px;color:#4d515a;letter-spacing:0.314px;">1599</div>
<div class="t" style="left:436.37px;top:167.00px;font-size:11.6px;color:#3571d8;letter-spacing:-0.139px;">KEVIN RUSSELL</div>
<div class="t" style="left:578.77px;top:167.00px;font-size:11.6px;color:#3571d8;letter-spacing:0.405px;">To Be Scheduled</div>
<div class="t" style="left:734.17px;top:167.00px;font-size:11.6px;color:#4d515a;letter-spacing:0.032px;">XR FEMUR 2 VIEWS(73550</div>
<div class="a" style="left:1040px;top:163px;width:59px;height:20px;overflow:hidden">
<div class="t" style="left:2.25px;top:4.00px;font-size:11.6px;color:#3571d8;letter-spacing:0.586px;">3055550149</div>
</div>
<div class="a" style="left:1112.7px;top:161.1px;width:24.59999999999991px;height:24.600000000000023px;background:#f7f8fa;border-radius:50%;box-shadow:0 1px 2px rgba(0,0,0,.18)"></div>
<div class="a" style="left:1143.9px;top:161.1px;width:24.59999999999991px;height:24.600000000000023px;background:#f7f8fa;border-radius:50%;box-shadow:0 1px 2px rgba(0,0,0,.18)"></div>
<div class="a" style="left:1175.2px;top:161.1px;width:24.59999999999991px;height:24.600000000000023px;background:#f7f8fa;border-radius:50%;box-shadow:0 1px 2px rgba(0,0,0,.18)"></div>
<svg style="left:1121px;top:167.4px;" width="9" height="11" viewBox="0 0 9 11"><path d="M0.6 0.6 L5.6 0.6 L8.4 3.4 L8.4 10.4 L0.6 10.4 Z" stroke="#4f535c" stroke-width="1.1" fill="none"/>
              <path d="M5.4 0.8 L5.4 3.6 L8.2 3.6" stroke="#4f535c" stroke-width="1" fill="none"/>
              <path d="M2.4 5 L6.2 9 M2.6 8.8 L4.6 6.6 L6.4 8.6" stroke="#4f535c" stroke-width=".9" fill="none"/></svg>
<svg style="left:1151px;top:167.6px;" width="11" height="11" viewBox="0 0 11 11"><rect x="0" y="1.5" width="10.4" height="9.5" rx="1" fill="#4f535c"/>
          <rect x="2" y="0" width="1.4" height="2.5" fill="#4f535c"/><rect x="7" y="0" width="1.4" height="2.5" fill="#4f535c"/>
          <g fill="#f7f8fa"><rect x="1.4" y="4.3" width="1.9" height="1.4"/><rect x="4.3" y="4.3" width="1.9" height="1.4"/><rect x="7.2" y="4.3" width="1.9" height="1.4"/>
          <rect x="1.4" y="6.6" width="1.9" height="1.4"/><rect x="4.3" y="6.6" width="1.9" height="1.4"/><rect x="7.2" y="6.6" width="1.9" height="1.4"/>
          <rect x="1.4" y="8.9" width="1.9" height="1.2"/><rect x="4.3" y="8.9" width="1.9" height="1.2"/><rect x="7.2" y="8.9" width="1.9" height="1.2"/></g></svg>
<svg style="left:1182px;top:172.20000000000002px;" width="12" height="3" viewBox="0 0 12 3"><circle cx="1.3" cy="1.2" r="1.25" fill="#4f535c"/><circle cx="5.5" cy="1.2" r="1.25" fill="#4f535c"/><circle cx="9.7" cy="1.2" r="1.25" fill="#4f535c"/></svg>
<div class="a" style="left:216.3px;top:204.70000000000002px;width:15.5px;height:15.300000000000011px;border:1px solid #d2d5db;border-radius:2px;background:#fff"></div>
<div class="t" style="left:323.69px;top:204.00px;font-size:11.6px;color:#4d515a;letter-spacing:0.070px;">1764</div>
<div class="t" style="left:436.37px;top:204.00px;font-size:11.6px;color:#3571d8;letter-spacing:0.026px;">FRANKLIN WEINTR...</div>
<div class="t" style="left:578.07px;top:204.00px;font-size:11.6px;color:#3571d8;letter-spacing:0.434px;">Pending Eligibility</div>
<div class="t" style="left:733.47px;top:204.00px;font-size:11.6px;color:#4d515a;letter-spacing:0.046px;">MRI LUMBAR SPINE W/WO(72158</div>
<div class="t" style="left:945.44px;top:204.00px;font-size:11.6px;color:#3571d8;letter-spacing:0.586px;">9545559873</div>
<div class="a" style="left:1040px;top:200px;width:59px;height:20px;overflow:hidden">
<div class="t" style="left:2.14px;top:4.00px;font-size:11.6px;color:#3571d8;letter-spacing:0.586px;">9545559873</div>
</div>
<div class="a" style="left:1112.7px;top:198.6px;width:24.59999999999991px;height:24.600000000000023px;background:#f7f8fa;border-radius:50%;box-shadow:0 1px 2px rgba(0,0,0,.18)"></div>
<div class="a" style="left:1143.9px;top:198.6px;width:24.59999999999991px;height:24.600000000000023px;background:#f7f8fa;border-radius:50%;box-shadow:0 1px 2px rgba(0,0,0,.18)"></div>
<div class="a" style="left:1175.2px;top:198.6px;width:24.59999999999991px;height:24.600000000000023px;background:#f7f8fa;border-radius:50%;box-shadow:0 1px 2px rgba(0,0,0,.18)"></div>
<svg style="left:1121px;top:204.9px;" width="9" height="11" viewBox="0 0 9 11"><path d="M0.6 0.6 L5.6 0.6 L8.4 3.4 L8.4 10.4 L0.6 10.4 Z" stroke="#4f535c" stroke-width="1.1" fill="none"/>
              <path d="M5.4 0.8 L5.4 3.6 L8.2 3.6" stroke="#4f535c" stroke-width="1" fill="none"/>
              <path d="M2.4 5 L6.2 9 M2.6 8.8 L4.6 6.6 L6.4 8.6" stroke="#4f535c" stroke-width=".9" fill="none"/></svg>
<svg style="left:1151px;top:205.1px;" width="11" height="11" viewBox="0 0 11 11"><rect x="0" y="1.5" width="10.4" height="9.5" rx="1" fill="#4f535c"/>
          <rect x="2" y="0" width="1.4" height="2.5" fill="#4f535c"/><rect x="7" y="0" width="1.4" height="2.5" fill="#4f535c"/>
          <g fill="#f7f8fa"><rect x="1.4" y="4.3" width="1.9" height="1.4"/><rect x="4.3" y="4.3" width="1.9" height="1.4"/><rect x="7.2" y="4.3" width="1.9" height="1.4"/>
          <rect x="1.4" y="6.6" width="1.9" height="1.4"/><rect x="4.3" y="6.6" width="1.9" height="1.4"/><rect x="7.2" y="6.6" width="1.9" height="1.4"/>
          <rect x="1.4" y="8.9" width="1.9" height="1.2"/><rect x="4.3" y="8.9" width="1.9" height="1.2"/><rect x="7.2" y="8.9" width="1.9" height="1.2"/></g></svg>
<svg style="left:1182px;top:209.70000000000002px;" width="12" height="3" viewBox="0 0 12 3"><circle cx="1.3" cy="1.2" r="1.25" fill="#4f535c"/><circle cx="5.5" cy="1.2" r="1.25" fill="#4f535c"/><circle cx="9.7" cy="1.2" r="1.25" fill="#4f535c"/></svg>
<div class="a" style="left:216.3px;top:242.20000000000002px;width:15.5px;height:15.299999999999983px;border:1px solid #d2d5db;border-radius:2px;background:#fff"></div>
<div class="t" style="left:323.69px;top:242.00px;font-size:11.6px;color:#4d515a;letter-spacing:0.147px;">1677</div>
<div class="t" style="left:436.72px;top:242.00px;font-size:11.6px;color:#3571d8;letter-spacing:-0.150px;">GREGORY SMITHS...</div>
<div class="t" style="left:578.77px;top:242.00px;font-size:11.6px;color:#3571d8;letter-spacing:0.405px;">To Be Scheduled</div>
<div class="t" style="left:734.17px;top:242.00px;font-size:11.6px;color:#4d515a;letter-spacing:0.003px;">XR ABDOMEN 2 VIEWS(74010</div>
<div class="a" style="left:1040px;top:238px;width:59px;height:20px;overflow:hidden">
<div class="t" style="left:2.14px;top:4.00px;font-size:11.6px;color:#3571d8;letter-spacing:0.586px;">5555555555</div>
</div>
<div class="a" style="left:1112.7px;top:236.1px;width:24.59999999999991px;height:24.599999999999994px;background:#f7f8fa;border-radius:50%;box-shadow:0 1px 2px rgba(0,0,0,.18)"></div>
<div class="a" style="left:1143.9px;top:236.1px;width:24.59999999999991px;height:24.599999999999994px;background:#f7f8fa;border-radius:50%;box-shadow:0 1px 2px rgba(0,0,0,.18)"></div>
<div class="a" style="left:1175.2px;top:236.1px;width:24.59999999999991px;height:24.599999999999994px;background:#f7f8fa;border-radius:50%;box-shadow:0 1px 2px rgba(0,0,0,.18)"></div>
<svg style="left:1121px;top:242.4px;" width="9" height="11" viewBox="0 0 9 11"><path d="M0.6 0.6 L5.6 0.6 L8.4 3.4 L8.4 10.4 L0.6 10.4 Z" stroke="#4f535c" stroke-width="1.1" fill="none"/>
              <path d="M5.4 0.8 L5.4 3.6 L8.2 3.6" stroke="#4f535c" stroke-width="1" fill="none"/>
              <path d="M2.4 5 L6.2 9 M2.6 8.8 L4.6 6.6 L6.4 8.6" stroke="#4f535c" stroke-width=".9" fill="none"/></svg>
<svg style="left:1151px;top:242.6px;" width="11" height="11" viewBox="0 0 11 11"><rect x="0" y="1.5" width="10.4" height="9.5" rx="1" fill="#4f535c"/>
          <rect x="2" y="0" width="1.4" height="2.5" fill="#4f535c"/><rect x="7" y="0" width="1.4" height="2.5" fill="#4f535c"/>
          <g fill="#f7f8fa"><rect x="1.4" y="4.3" width="1.9" height="1.4"/><rect x="4.3" y="4.3" width="1.9" height="1.4"/><rect x="7.2" y="4.3" width="1.9" height="1.4"/>
          <rect x="1.4" y="6.6" width="1.9" height="1.4"/><rect x="4.3" y="6.6" width="1.9" height="1.4"/><rect x="7.2" y="6.6" width="1.9" height="1.4"/>
          <rect x="1.4" y="8.9" width="1.9" height="1.2"/><rect x="4.3" y="8.9" width="1.9" height="1.2"/><rect x="7.2" y="8.9" width="1.9" height="1.2"/></g></svg>
<svg style="left:1182px;top:247.20000000000002px;" width="12" height="3" viewBox="0 0 12 3"><circle cx="1.3" cy="1.2" r="1.25" fill="#4f535c"/><circle cx="5.5" cy="1.2" r="1.25" fill="#4f535c"/><circle cx="9.7" cy="1.2" r="1.25" fill="#4f535c"/></svg>
<div class="a" style="left:216.3px;top:279.7px;width:15.5px;height:15.300000000000011px;border:1px solid #d2d5db;border-radius:2px;background:#fff"></div>
<div class="t" style="left:323.69px;top:279.00px;font-size:11.6px;color:#4d515a;letter-spacing:0.314px;">1669</div>
<div class="t" style="left:436.37px;top:279.00px;font-size:11.6px;color:#3571d8;letter-spacing:-0.062px;">LERON MARINOVS...</div>
<div class="t" style="left:578.07px;top:279.00px;font-size:11.6px;color:#3571d8;letter-spacing:0.434px;">Pending Eligibility</div>
<div class="t" style="left:733.82px;top:279.00px;font-size:11.6px;color:#4d515a;letter-spacing:0.085px;">CT ABDOMEN AND PELVIS W/...</div>
<div class="t" style="left:945.44px;top:279.00px;font-size:11.6px;color:#3571d8;letter-spacing:0.865px;">8454303089</div>
<div class="a" style="left:1040px;top:275px;width:59px;height:20px;overflow:hidden">
<div class="t" style="left:2.14px;top:4.00px;font-size:11.6px;color:#3571d8;letter-spacing:0.598px;">8454303089</div>
</div>
<div class="a" style="left:1143.9px;top:273.59999999999997px;width:24.59999999999991px;height:24.600000000000023px;background:#f7f8fa;border-radius:50%;box-shadow:0 1px 2px rgba(0,0,0,.18)"></div>
<div class="a" style="left:1175.2px;top:273.59999999999997px;width:24.59999999999991px;height:24.600000000000023px;background:#f7f8fa;border-radius:50%;box-shadow:0 1px 2px rgba(0,0,0,.18)"></div>
<svg style="left:1151px;top:280.09999999999997px;" width="11" height="11" viewBox="0 0 11 11"><rect x="0" y="1.5" width="10.4" height="9.5" rx="1" fill="#4f535c"/>
          <rect x="2" y="0" width="1.4" height="2.5" fill="#4f535c"/><rect x="7" y="0" width="1.4" height="2.5" fill="#4f535c"/>
          <g fill="#f7f8fa"><rect x="1.4" y="4.3" width="1.9" height="1.4"/><rect x="4.3" y="4.3" width="1.9" height="1.4"/><rect x="7.2" y="4.3" width="1.9" height="1.4"/>
          <rect x="1.4" y="6.6" width="1.9" height="1.4"/><rect x="4.3" y="6.6" width="1.9" height="1.4"/><rect x="7.2" y="6.6" width="1.9" height="1.4"/>
          <rect x="1.4" y="8.9" width="1.9" height="1.2"/><rect x="4.3" y="8.9" width="1.9" height="1.2"/><rect x="7.2" y="8.9" width="1.9" height="1.2"/></g></svg>
<svg style="left:1182px;top:284.7px;" width="12" height="3" viewBox="0 0 12 3"><circle cx="1.3" cy="1.2" r="1.25" fill="#4f535c"/><circle cx="5.5" cy="1.2" r="1.25" fill="#4f535c"/><circle cx="9.7" cy="1.2" r="1.25" fill="#4f535c"/></svg>
<div class="a" style="left:216.3px;top:317.2px;width:15.5px;height:15.300000000000011px;border:1px solid #d2d5db;border-radius:2px;background:#fff"></div>
<div class="t" style="left:324.04px;top:317.00px;font-size:11.6px;color:#4d515a;letter-spacing:1.173px;">502</div>
<div class="t" style="left:436.72px;top:317.00px;font-size:11.6px;color:#3571d8;letter-spacing:-0.111px;">GIOVANA BARBOSA</div>
<div class="t" style="left:578.19px;top:317.00px;font-size:11.6px;color:#3571d8;letter-spacing:0.265px;">1st Call</div>
<div class="t" style="left:733.47px;top:317.00px;font-size:11.6px;color:#4d515a;letter-spacing:0.046px;">MRI LUMBAR SPINE W/WO(72158</div>
<div class="a" style="left:1040px;top:313px;width:59px;height:20px;overflow:hidden">
<div class="t" style="left:2.25px;top:4.00px;font-size:11.6px;color:#3571d8;letter-spacing:0.573px;">3055550000</div>
</div>
<div class="a" style="left:1112.7px;top:311.09999999999997px;width:24.59999999999991px;height:24.600000000000023px;background:#f7f8fa;border-radius:50%;box-shadow:0 1px 2px rgba(0,0,0,.18)"></div>
<div class="a" style="left:1143.9px;top:311.09999999999997px;width:24.59999999999991px;height:24.600000000000023px;background:#f7f8fa;border-radius:50%;box-shadow:0 1px 2px rgba(0,0,0,.18)"></div>
<div class="a" style="left:1175.2px;top:311.09999999999997px;width:24.59999999999991px;height:24.600000000000023px;background:#f7f8fa;border-radius:50%;box-shadow:0 1px 2px rgba(0,0,0,.18)"></div>
<svg style="left:1121px;top:317.4px;" width="9" height="11" viewBox="0 0 9 11"><path d="M0.6 0.6 L5.6 0.6 L8.4 3.4 L8.4 10.4 L0.6 10.4 Z" stroke="#4f535c" stroke-width="1.1" fill="none"/>
              <path d="M5.4 0.8 L5.4 3.6 L8.2 3.6" stroke="#4f535c" stroke-width="1" fill="none"/>
              <path d="M2.4 5 L6.2 9 M2.6 8.8 L4.6 6.6 L6.4 8.6" stroke="#4f535c" stroke-width=".9" fill="none"/></svg>
<svg style="left:1151px;top:317.59999999999997px;" width="11" height="11" viewBox="0 0 11 11"><rect x="0" y="1.5" width="10.4" height="9.5" rx="1" fill="#4f535c"/>
          <rect x="2" y="0" width="1.4" height="2.5" fill="#4f535c"/><rect x="7" y="0" width="1.4" height="2.5" fill="#4f535c"/>
          <g fill="#f7f8fa"><rect x="1.4" y="4.3" width="1.9" height="1.4"/><rect x="4.3" y="4.3" width="1.9" height="1.4"/><rect x="7.2" y="4.3" width="1.9" height="1.4"/>
          <rect x="1.4" y="6.6" width="1.9" height="1.4"/><rect x="4.3" y="6.6" width="1.9" height="1.4"/><rect x="7.2" y="6.6" width="1.9" height="1.4"/>
          <rect x="1.4" y="8.9" width="1.9" height="1.2"/><rect x="4.3" y="8.9" width="1.9" height="1.2"/><rect x="7.2" y="8.9" width="1.9" height="1.2"/></g></svg>
<svg style="left:1182px;top:322.2px;" width="12" height="3" viewBox="0 0 12 3"><circle cx="1.3" cy="1.2" r="1.25" fill="#4f535c"/><circle cx="5.5" cy="1.2" r="1.25" fill="#4f535c"/><circle cx="9.7" cy="1.2" r="1.25" fill="#4f535c"/></svg>
<div class="a" style="left:216.3px;top:354.7px;width:15.5px;height:15.300000000000011px;border:1px solid #d2d5db;border-radius:2px;background:#fff"></div>
<div class="t" style="left:324.27px;top:354.00px;font-size:11.6px;color:#4d515a;letter-spacing:1.307px;">499</div>
<div class="t" style="left:437.30px;top:354.00px;font-size:11.6px;color:#3571d8;letter-spacing:-0.127px;">ANDREA MALONE</div>
<div class="t" style="left:578.54px;top:354.00px;font-size:11.6px;color:#3571d8;letter-spacing:0.127px;">STAT</div>
<div class="t" style="left:733.47px;top:354.00px;font-size:11.6px;color:#4d515a;letter-spacing:0.040px;">MRA NECK/CAROTIDS WITHOU...</div>
<div class="a" style="left:1040px;top:350px;width:59px;height:20px;overflow:hidden">
<div class="t" style="left:2.25px;top:4.00px;font-size:11.6px;color:#3571d8;letter-spacing:0.573px;">3055550000</div>
</div>
<div class="a" style="left:1112.7px;top:348.59999999999997px;width:24.59999999999991px;height:24.600000000000023px;background:#f7f8fa;border-radius:50%;box-shadow:0 1px 2px rgba(0,0,0,.18)"></div>
<div class="a" style="left:1143.9px;top:348.59999999999997px;width:24.59999999999991px;height:24.600000000000023px;background:#f7f8fa;border-radius:50%;box-shadow:0 1px 2px rgba(0,0,0,.18)"></div>
<div class="a" style="left:1175.2px;top:348.59999999999997px;width:24.59999999999991px;height:24.600000000000023px;background:#f7f8fa;border-radius:50%;box-shadow:0 1px 2px rgba(0,0,0,.18)"></div>
<svg style="left:1121px;top:354.9px;" width="9" height="11" viewBox="0 0 9 11"><path d="M0.6 0.6 L5.6 0.6 L8.4 3.4 L8.4 10.4 L0.6 10.4 Z" stroke="#4f535c" stroke-width="1.1" fill="none"/>
              <path d="M5.4 0.8 L5.4 3.6 L8.2 3.6" stroke="#4f535c" stroke-width="1" fill="none"/>
              <path d="M2.4 5 L6.2 9 M2.6 8.8 L4.6 6.6 L6.4 8.6" stroke="#4f535c" stroke-width=".9" fill="none"/></svg>
<svg style="left:1151px;top:355.09999999999997px;" width="11" height="11" viewBox="0 0 11 11"><rect x="0" y="1.5" width="10.4" height="9.5" rx="1" fill="#4f535c"/>
          <rect x="2" y="0" width="1.4" height="2.5" fill="#4f535c"/><rect x="7" y="0" width="1.4" height="2.5" fill="#4f535c"/>
          <g fill="#f7f8fa"><rect x="1.4" y="4.3" width="1.9" height="1.4"/><rect x="4.3" y="4.3" width="1.9" height="1.4"/><rect x="7.2" y="4.3" width="1.9" height="1.4"/>
          <rect x="1.4" y="6.6" width="1.9" height="1.4"/><rect x="4.3" y="6.6" width="1.9" height="1.4"/><rect x="7.2" y="6.6" width="1.9" height="1.4"/>
          <rect x="1.4" y="8.9" width="1.9" height="1.2"/><rect x="4.3" y="8.9" width="1.9" height="1.2"/><rect x="7.2" y="8.9" width="1.9" height="1.2"/></g></svg>
<svg style="left:1182px;top:359.7px;" width="12" height="3" viewBox="0 0 12 3"><circle cx="1.3" cy="1.2" r="1.25" fill="#4f535c"/><circle cx="5.5" cy="1.2" r="1.25" fill="#4f535c"/><circle cx="9.7" cy="1.2" r="1.25" fill="#4f535c"/></svg>
<div class="a" style="left:216.3px;top:392.2px;width:15.5px;height:15.300000000000011px;border:1px solid #d2d5db;border-radius:2px;background:#fff"></div>
<div class="t" style="left:323.92px;top:392.00px;font-size:11.6px;color:#4d515a;letter-spacing:1.481px;">609</div>
<div class="t" style="left:436.37px;top:392.00px;font-size:11.6px;color:#3571d8;letter-spacing:-0.037px;">PAULA ANDERSON</div>
<div class="t" style="left:578.07px;top:392.00px;font-size:11.6px;color:#3571d8;letter-spacing:0.431px;">Pending Clinicals</div>
<div class="t" style="left:733.47px;top:392.00px;font-size:11.6px;color:#4d515a;letter-spacing:0.116px;">PET/CT SKULL TO THIGH MID (...</div>
<div class="a" style="left:1040px;top:388px;width:59px;height:20px;overflow:hidden">
<div class="t" style="left:2.25px;top:4.00px;font-size:11.6px;color:#3571d8;letter-spacing:0.573px;">3055550000</div>
</div>
<div class="a" style="left:1112.7px;top:386.09999999999997px;width:24.59999999999991px;height:24.600000000000023px;background:#f7f8fa;border-radius:50%;box-shadow:0 1px 2px rgba(0,0,0,.18)"></div>
<div class="a" style="left:1143.9px;top:386.09999999999997px;width:24.59999999999991px;height:24.600000000000023px;background:#f7f8fa;border-radius:50%;box-shadow:0 1px 2px rgba(0,0,0,.18)"></div>
<div class="a" style="left:1175.2px;top:386.09999999999997px;width:24.59999999999991px;height:24.600000000000023px;background:#f7f8fa;border-radius:50%;box-shadow:0 1px 2px rgba(0,0,0,.18)"></div>
<svg style="left:1121px;top:392.4px;" width="9" height="11" viewBox="0 0 9 11"><path d="M0.6 0.6 L5.6 0.6 L8.4 3.4 L8.4 10.4 L0.6 10.4 Z" stroke="#4f535c" stroke-width="1.1" fill="none"/>
              <path d="M5.4 0.8 L5.4 3.6 L8.2 3.6" stroke="#4f535c" stroke-width="1" fill="none"/>
              <path d="M2.4 5 L6.2 9 M2.6 8.8 L4.6 6.6 L6.4 8.6" stroke="#4f535c" stroke-width=".9" fill="none"/></svg>
<svg style="left:1151px;top:392.59999999999997px;" width="11" height="11" viewBox="0 0 11 11"><rect x="0" y="1.5" width="10.4" height="9.5" rx="1" fill="#4f535c"/>
          <rect x="2" y="0" width="1.4" height="2.5" fill="#4f535c"/><rect x="7" y="0" width="1.4" height="2.5" fill="#4f535c"/>
          <g fill="#f7f8fa"><rect x="1.4" y="4.3" width="1.9" height="1.4"/><rect x="4.3" y="4.3" width="1.9" height="1.4"/><rect x="7.2" y="4.3" width="1.9" height="1.4"/>
          <rect x="1.4" y="6.6" width="1.9" height="1.4"/><rect x="4.3" y="6.6" width="1.9" height="1.4"/><rect x="7.2" y="6.6" width="1.9" height="1.4"/>
          <rect x="1.4" y="8.9" width="1.9" height="1.2"/><rect x="4.3" y="8.9" width="1.9" height="1.2"/><rect x="7.2" y="8.9" width="1.9" height="1.2"/></g></svg>
<svg style="left:1182px;top:397.2px;" width="12" height="3" viewBox="0 0 12 3"><circle cx="1.3" cy="1.2" r="1.25" fill="#4f535c"/><circle cx="5.5" cy="1.2" r="1.25" fill="#4f535c"/><circle cx="9.7" cy="1.2" r="1.25" fill="#4f535c"/></svg>
<div class="a" style="left:216.3px;top:429.7px;width:15.5px;height:15.300000000000011px;border:1px solid #d2d5db;border-radius:2px;background:#fff"></div>
<div class="t" style="left:324.04px;top:429.00px;font-size:11.6px;color:#4d515a;letter-spacing:1.307px;">594</div>
<div class="t" style="left:437.07px;top:429.00px;font-size:11.6px;color:#3571d8;letter-spacing:-0.182px;">TIFFANY AGGUIRE</div>
<div class="t" style="left:578.07px;top:429.00px;font-size:11.6px;color:#3571d8;letter-spacing:0.431px;">Pending Clinicals</div>
<div class="t" style="left:733.47px;top:429.00px;font-size:11.6px;color:#4d515a;letter-spacing:0.046px;">MRI LUMBAR SPINE W/WO(72158</div>
<div class="a" style="left:1040px;top:425px;width:59px;height:20px;overflow:hidden">
<div class="t" style="left:2.25px;top:4.00px;font-size:11.6px;color:#3571d8;letter-spacing:0.573px;">3055550000</div>
</div>
<div class="a" style="left:1112.7px;top:423.59999999999997px;width:24.59999999999991px;height:24.600000000000023px;background:#f7f8fa;border-radius:50%;box-shadow:0 1px 2px rgba(0,0,0,.18)"></div>
<div class="a" style="left:1143.9px;top:423.59999999999997px;width:24.59999999999991px;height:24.600000000000023px;background:#f7f8fa;border-radius:50%;box-shadow:0 1px 2px rgba(0,0,0,.18)"></div>
<div class="a" style="left:1175.2px;top:423.59999999999997px;width:24.59999999999991px;height:24.600000000000023px;background:#f7f8fa;border-radius:50%;box-shadow:0 1px 2px rgba(0,0,0,.18)"></div>
<svg style="left:1121px;top:429.9px;" width="9" height="11" viewBox="0 0 9 11"><path d="M0.6 0.6 L5.6 0.6 L8.4 3.4 L8.4 10.4 L0.6 10.4 Z" stroke="#4f535c" stroke-width="1.1" fill="none"/>
              <path d="M5.4 0.8 L5.4 3.6 L8.2 3.6" stroke="#4f535c" stroke-width="1" fill="none"/>
              <path d="M2.4 5 L6.2 9 M2.6 8.8 L4.6 6.6 L6.4 8.6" stroke="#4f535c" stroke-width=".9" fill="none"/></svg>
<svg style="left:1151px;top:430.09999999999997px;" width="11" height="11" viewBox="0 0 11 11"><rect x="0" y="1.5" width="10.4" height="9.5" rx="1" fill="#4f535c"/>
          <rect x="2" y="0" width="1.4" height="2.5" fill="#4f535c"/><rect x="7" y="0" width="1.4" height="2.5" fill="#4f535c"/>
          <g fill="#f7f8fa"><rect x="1.4" y="4.3" width="1.9" height="1.4"/><rect x="4.3" y="4.3" width="1.9" height="1.4"/><rect x="7.2" y="4.3" width="1.9" height="1.4"/>
          <rect x="1.4" y="6.6" width="1.9" height="1.4"/><rect x="4.3" y="6.6" width="1.9" height="1.4"/><rect x="7.2" y="6.6" width="1.9" height="1.4"/>
          <rect x="1.4" y="8.9" width="1.9" height="1.2"/><rect x="4.3" y="8.9" width="1.9" height="1.2"/><rect x="7.2" y="8.9" width="1.9" height="1.2"/></g></svg>
<svg style="left:1182px;top:434.7px;" width="12" height="3" viewBox="0 0 12 3"><circle cx="1.3" cy="1.2" r="1.25" fill="#4f535c"/><circle cx="5.5" cy="1.2" r="1.25" fill="#4f535c"/><circle cx="9.7" cy="1.2" r="1.25" fill="#4f535c"/></svg>
<div class="a" style="left:197px;top:970px;width:1029px;height:39.5px;background:#f4f5f7;border-top:1px solid #dadde3;border-radius:0 0 6px 6px"></div>
<div class="t" style="left:209.65px;top:979.00px;font-size:11.3px;color:#6d717a;letter-spacing:0.323px;">Showing</div>
<div class="t" style="left:209.31px;top:993.00px;font-size:11.3px;color:#454951;letter-spacing:0.267px;">1 - 8 of 8</div>
<svg style="left:619.5px;top:985.5px;" width="10" height="11" viewBox="0 0 10 11"><rect x="0.3" y="0.5" width="1.8" height="10" fill="#4f535c"/><path d="M9.2 0.5 L2.6 5.5 L9.2 10.5 Z" fill="#4f535c"/></svg>
<svg style="left:643px;top:985.5px;" width="8" height="11" viewBox="0 0 8 11"><path d="M6 0.8 L1.5 5.5 L6 10.2" stroke="#7d818a" stroke-width="1.1" fill="none"/></svg>
<div class="a" style="left:663px;top:980.8px;width:21.299999999999955px;height:19.90000000000009px;border:2px solid #2f7fd0;border-radius:4px;background:#f8f9fb"></div>
<div class="t" style="left:669.76px;top:986.00px;font-size:10.5px;color:#50545c;">1</div>
<svg style="left:697px;top:985.5px;" width="8" height="11" viewBox="0 0 8 11"><path d="M1.5 0.8 L6 5.5 L1.5 10.2" stroke="#7d818a" stroke-width="1.1" fill="none"/></svg>
<svg style="left:719px;top:985.5px;" width="10" height="11" viewBox="0 0 10 11"><rect x="7.3" y="0.5" width="1.8" height="10" fill="#4f535c"/><path d="M0.2 0.5 L6.8 5.5 L0.2 10.5 Z" fill="#4f535c"/></svg>
<div class="t" style="left:1110.10px;top:986.00px;font-size:11.3px;color:#6d717a;letter-spacing:0.205px;">Per Page:</div>
<div class="a" style="left:1167.4px;top:977.6px;width:44.799999999999955px;height:25.699999999999932px;border:1px solid #dcdfe4;border-radius:4px;background:#fff"></div>
<div class="t" style="left:1178.03px;top:986.00px;font-size:11.3px;color:#454951;letter-spacing:0.904px;">75</div>
<svg style="left:1195px;top:987.5px;" width="10" height="7" viewBox="0 0 10 7"><path d="M0.8 0.8 L4.8 5 L8.8 0.8" stroke="#454951" stroke-width="1.4" fill="none"/></svg>
<div class="a" style="left:1244.6px;top:112.2px;width:25.200000000000045px;height:24.999999999999986px;background:#3a2de0;border-radius:50%"></div>
<svg style="left:1251.5px;top:117px;" width="12" height="15" viewBox="0 0 12 15"><path d="M4.2 2.2 L1.8 2.2 Q0.8 2.2 0.8 3.2 L0.8 13.2 Q0.8 14.2 1.8 14.2 L9.8 14.2 Q10.8 14.2 10.8 13.2 L10.8 3.2 Q10.8 2.2 9.8 2.2 L7.4 2.2" stroke="#fff" stroke-width="1.1" fill="none"/><path d="M3.8 3.2 L5.8 0.8 L7.8 3.2 Z" stroke="#fff" stroke-width="1" fill="none"/><path d="M2.8 7.2 L3.6 7.2 M4.8 7.2 L8.6 7.2 M2.8 9.4 L3.6 9.4 M4.8 9.4 L8.6 9.4" stroke="#fff" stroke-width="1.1"/></svg>
<div class="t" style="left:1275.86px;top:119.00px;font-size:13.4px;color:#3a3d46;letter-spacing:-0.199px;">Summary</div>
<div class="a" style="left:1446.7px;top:113px;width:80.09999999999991px;height:23.30000000000001px;background:#0b66e4;border-radius:4px"></div>
<svg style="left:1461px;top:118px;" width="10" height="13" viewBox="0 0 10 13"><path d="M0.5 0.5 L6 0.5 L9.5 4 L9.5 12.5 L0.5 12.5 Z" fill="#fff"/><path d="M2.5 6 L6.8 10.5 M2.8 10.2 L5 7.8 L7 10" stroke="#0b66e4" stroke-width=".9" fill="none"/></svg>
<div class="t" style="left:1472.50px;top:119.00px;font-size:11.7px;color:#fff;-webkit-text-stroke:0.35px #fff;letter-spacing:-0.180px;">View Rx</div>
<div class="a" style="left:1532.9px;top:113px;width:87.89999999999986px;height:23.30000000000001px;background:#0b66e4;border-radius:4px"></div>
<svg style="left:1546px;top:118px;" width="11" height="12" viewBox="0 0 11 12"><rect x="0" y="1.5" width="10.5" height="10.5" rx="1" fill="#fff"/><rect x="2" y="0" width="1.4" height="2.6" fill="#fff"/><rect x="7.1" y="0" width="1.4" height="2.6" fill="#fff"/>
       <g fill="#0b66e4"><rect x="1.4" y="4.6" width="1.8" height="1.5"/><rect x="4.3" y="4.6" width="1.8" height="1.5"/><rect x="7.2" y="4.6" width="1.8" height="1.5"/><rect x="1.4" y="7.2" width="1.8" height="1.5"/><rect x="4.3" y="7.2" width="1.8" height="1.5"/><rect x="7.2" y="7.2" width="1.8" height="1.5"/><rect x="1.4" y="9.6" width="1.8" height="1.3"/><rect x="4.3" y="9.6" width="1.8" height="1.3"/></g></svg>
<div class="t" style="left:1558.51px;top:119.00px;font-size:12.2px;color:#fff;-webkit-text-stroke:0.37px #fff;letter-spacing:-0.206px;">Schedule</div>
<div class="a" style="left:1627px;top:112px;width:95.79999999999995px;height:24.80000000000001px;border:1px solid #3f8fd6;border-radius:4px;background:#fff"></div>
<svg style="left:1640px;top:118px;" width="8" height="13" viewBox="0 0 8 13"><rect x="0.8" y="0.8" width="6.4" height="11.4" rx="1.2" stroke="#3571d0" stroke-width="1.5" fill="none"/><rect x="3" y="9.5" width="2" height="1.2" fill="#3571d0"/></svg>
<div class="t" style="left:1654.92px;top:120.00px;font-size:9.4px;color:#4c7fce;letter-spacing:-0.225px;">SMS Console</div>
<div class="a" style="left:1729.1px;top:112px;width:81.90000000000009px;height:24.80000000000001px;border:1px solid #3f8fd6;border-radius:4px;background:#fff"></div>
<svg style="left:1742px;top:118px;" width="10" height="13" viewBox="0 0 10 13"><rect x="0.8" y="1.8" width="8.4" height="10.4" rx="1.2" stroke="#3571d0" stroke-width="1.3" fill="none"/><rect x="2.8" y="0.6" width="4.4" height="2.4" rx=".6" fill="#fff" stroke="#3571d0" stroke-width="1"/><path d="M2.8 6 L7.2 6 M2.8 8.3 L7.2 8.3 M2.8 10.4 L5.5 10.4" stroke="#3571d0" stroke-width=".9"/></svg>
<div class="t" style="left:1756.81px;top:120.00px;font-size:9.7px;color:#4c7fce;letter-spacing:-0.185px;">Summary</div>
<div class="a" style="left:1817.3px;top:112px;width:91.79999999999995px;height:24.80000000000001px;border:1px solid #3f8fd6;border-radius:4px;background:#fff"></div>
<svg style="left:1830.5px;top:118px;" width="11" height="12" viewBox="0 0 11 12"><rect x="0" y="1.5" width="10.5" height="10.5" rx="1.2" fill="#3571d0"/><rect x="2" y="0" width="1.5" height="2.8" fill="#3571d0"/><rect x="7" y="0" width="1.5" height="2.8" fill="#3571d0"/><rect x="0.8" y="3.8" width="8.9" height="1" fill="#fff"/><path d="M2.8 7.8 L4.6 9.6 L7.8 6.3" stroke="#fff" stroke-width="1.2" fill="none"/></svg>
<div class="t" style="left:1846.60px;top:120.00px;font-size:10.1px;color:#4c7fce;letter-spacing:-0.189px;">Visit Details</div>
<div class="a" style="left:1915.4px;top:112px;width:67.5px;height:24.80000000000001px;border:1px solid #c2c6ce;border-radius:4px;background:#fff"></div>
<svg style="left:1929px;top:119.5px;" width="10" height="9" viewBox="0 0 10 9"><path d="M0 0.7 L9.5 0.7 M0 4.4 L9.5 4.4 M0 8.1 L9.5 8.1" stroke="#555" stroke-width="1.1"/></svg>
<div class="t" style="left:1941.47px;top:118.00px;font-size:12.2px;color:#25272e;font-weight:700;letter-spacing:-0.199px;">More</div>
<div class="a" style="left:1248px;top:159.4px;width:139px;height:30.599999999999994px;border:1px solid #dfe1e5;border-radius:16px;background:#fff;box-shadow:0 1px 2px rgba(0,0,0,.12)"></div>
<div class="a" style="left:1251.7px;top:162px;width:25.5px;height:25.5px;background:#19bfc0;border-radius:50%"></div>
<svg style="left:1257px;top:167.5px;" width="15" height="15" viewBox="0 0 15 15"><path d="M3.5 1.5 L5.6 4.6 L4.3 6.2 Q5.6 9 8.6 10.6 L10.2 9.3 L13.3 11.4 L12 13.5 Q6.5 13.5 3 9 Q1 5.5 1.4 2.8 Z" fill="none" stroke="#fff" stroke-width="1.3" stroke-linejoin="round"/></svg>
<div class="t" style="left:1282.70px;top:164.00px;font-size:10px;color:#8d9099;letter-spacing:0.124px;">Pending Reason</div>
<div class="t" style="left:1283.26px;top:174.00px;font-size:12px;color:#3a3d46;letter-spacing:-0.208px;">To Be Scheduled</div>
<div class="a" style="left:1393.8px;top:159.4px;width:142.20000000000005px;height:30.599999999999994px;border:1px solid #dfe1e5;border-radius:16px;background:#fff;box-shadow:0 1px 2px rgba(0,0,0,.12)"></div>
<div class="a" style="left:1397.5px;top:162px;width:25.5px;height:25.5px;background:#22b55b;border-radius:50%"></div>
<div class="t" style="left:1404.85px;top:168.00px;font-size:15px;color:#fff;font-weight:700;">$</div>
<div class="t" style="left:1429.10px;top:164.00px;font-size:10px;color:#8d9099;letter-spacing:0.218px;">Total Amount Owed</div>
<div class="t" style="left:1428.93px;top:174.00px;font-size:12.2px;color:#3a3d46;letter-spacing:-0.079px;">0.00</div>
<div class="a" style="left:1248px;top:199.5px;width:482.5px;height:97.0px;border:1px solid #cfd3dc;border-top:3px solid #f7a21b;border-radius:3px;background:#fff"></div>
<svg style="left:1259px;top:221px;" width="11" height="8" viewBox="0 0 11 8"><path d="M0.8 1 L5.3 5.5 L9.8 1" stroke="#2f6fe0" stroke-width="1.5" fill="none"/></svg>
<div class="a" style="left:1277.2px;top:212.2px;width:25.0px;height:25.100000000000023px;background:#f7a21b;border-radius:50%"></div>
<div class="a" style="left:1288.6px;top:218.5px;width:2.2000000000000455px;height:9.0px;background:#fff;border-radius:1px"></div>
<div class="a" style="left:1288.6px;top:229.5px;width:2.2000000000000455px;height:2.1999999999999886px;background:#fff;border-radius:1px"></div>
<div class="t" style="left:1308.70px;top:219.00px;font-size:13.2px;color:#3a3d46;letter-spacing:-0.105px;">Alerts (1)</div>
<div class="a" style="left:1257.8px;top:246.5px;width:462.4000000000001px;height:1.0px;background:#dcdfe4"></div>
<div class="a" style="left:1257.8px;top:260px;width:462.4000000000001px;height:26.30000000000001px;background:#fff3cf;border:1px solid #e5514f;border-radius:3px"></div>
<div class="t" style="left:1264.62px;top:267.00px;font-size:11.7px;color:#d8403d;-webkit-text-stroke:0.18px #d8403d;letter-spacing:0.037px;">CPT Alert: Please follow a clear liquid diet the entire day before your exam.</div>
<svg style="left:1252px;top:336.5px;" width="7" height="10" viewBox="0 0 7 10"><path d="M1 0.8 L5.5 4.7 L1 8.6" stroke="#2f6fe0" stroke-width="1.5" fill="none"/></svg>
<div class="a" style="left:1266.6px;top:329px;width:25.100000000000136px;height:25px;background:#707275;border-radius:50%"></div>
<svg style="left:1270px;top:334px;" width="19" height="15" viewBox="0 0 19 15"><path d="M6.5 0.5 Q12.5 0.5 12.5 5 Q12.5 9.5 6.5 9.5 L5.5 9.5 L2.5 11 L3.2 8.6 Q0.5 7.5 0.5 5 Q0.5 0.5 6.5 0.5 Z" fill="#fff"/>
      <path d="M13 5.5 Q18.3 6 18.3 10 Q18.3 12.4 16.3 13.2 L17 15 L14 13.8 Q9 13.8 8.3 10.3 Q12 9.8 13 5.5 Z" fill="#fff" stroke="#707275" stroke-width=".6"/></svg>
<div class="t" style="left:1297.88px;top:328.00px;font-size:13.1px;color:#3a3d46;letter-spacing:-0.172px;">SMS Chat</div>
<div class="t" style="left:1297.34px;top:345.00px;font-size:13.2px;color:#7b7f88;letter-spacing:0.052px;">No Unread Messages</div>
<svg style="left:1608px;top:334.5px;" width="15" height="13" viewBox="0 0 15 13"><path d="M0.8 6.5 Q7.5 -1.5 14.2 6.5 Q7.5 14.5 0.8 6.5 Z" stroke="#2f6fe0" stroke-width="1.3" fill="none"/><circle cx="7.5" cy="6.5" r="2.8" stroke="#2f6fe0" stroke-width="1.3" fill="none"/></svg>
<div class="t" style="left:1628.33px;top:336.00px;font-size:11.8px;color:#2f6fe0;-webkit-text-stroke:0.18px #2f6fe0;letter-spacing:-0.096px;">Open Chat Console</div>
<div class="a" style="left:1248px;top:394.3px;width:25px;height:24.69999999999999px;background:#0b66e4;border-radius:50%"></div>
<svg style="left:1254.8px;top:399.95000000000005px;" width="11.399999999999999" height="13.299999999999999" viewBox="0 0 11.399999999999999 13.299999999999999"><g transform="scale(0.95)"><rect x="1" y="2" width="10" height="11.5" rx="1.5" fill="#fff"/>
      <rect x="3.5" y="0.5" width="5" height="3" rx="1" fill="#fff" stroke="#0b66e4" stroke-width=".8"/>
      <g fill="#0b66e4"><rect x="3" y="6" width="1.2" height="1.2"/><rect x="5" y="6" width="4" height="1.2"/>
      <rect x="3" y="8.3" width="1.2" height="1.2"/><rect x="5" y="8.3" width="4" height="1.2"/>
      <rect x="3" y="10.6" width="1.2" height="1.2"/><rect x="5" y="10.6" width="4" height="1.2"/></g></g></svg>
<div class="t" style="left:1278.61px;top:392.00px;font-size:12.7px;color:#5b5f68;letter-spacing:0.162px;">11/23/2021</div>
<div class="t" style="left:1278.48px;top:408.00px;font-size:12.7px;color:#5b5f68;letter-spacing:0.241px;">Miami - Aventura</div>
<div class="a" style="left:1248px;top:429px;width:482.5px;height:1px;background:#dcdfe4"></div>
<div class="a" style="left:1248px;top:439.3px;width:482.5px;height:47.19999999999999px;border:1px solid #cfd3dc;border-top:3px solid #3a2ee0;border-radius:3px;background:#fff"></div>
<svg style="left:1258.5px;top:458px;" width="7" height="10" viewBox="0 0 7 10"><path d="M1 0.8 L5.5 4.7 L1 8.6" stroke="#3a2ee0" stroke-width="1.5" fill="none"/></svg>
<div class="a" style="left:1271.1px;top:453.6px;width:32.600000000000136px;height:18.599999999999966px;background:#3a2ee0;border-radius:3px"></div>
<div class="t" style="left:1276.96px;top:457.00px;font-size:13.5px;color:#fff;font-weight:700;letter-spacing:1.006px;">CR</div>
<div class="t" style="left:1309.23px;top:450.00px;font-size:9.6px;color:#7b7f88;letter-spacing:0.135px;">Miami CR</div>
<div class="t" style="left:1309.16px;top:463.00px;font-size:12px;color:#5b5f68;letter-spacing:-0.164px;">12:00 AM</div>
<div class="a" style="left:1364.5px;top:466px;width:4.0px;height:4px;background:#5b5f68;border-radius:50%"></div>
<div class="t" style="left:1374.67px;top:464.00px;font-size:11.8px;color:#5b5f68;letter-spacing:-0.226px;">15 Min</div>
<svg style="left:1706px;top:457.5px;" width="4" height="11" viewBox="0 0 4 11"><circle cx="1.6" cy="1.3" r="1.2" fill="#2f5fd0"/><circle cx="1.6" cy="5" r="1.2" fill="#2f5fd0"/><circle cx="1.6" cy="8.7" r="1.2" fill="#2f5fd0"/></svg>
<div class="a" style="left:1247.7px;top:515.3px;width:25.0px;height:25.0px;background:#19bfc0;border-radius:50%"></div>
<svg style="left:1253.5px;top:520px;" width="14" height="15" viewBox="0 0 14 15"><circle cx="7" cy="4" r="3.6" fill="#fff"/><path d="M0.5 14.5 Q0.5 8.5 7 8.3 Q13.5 8.5 13.5 14.5 Z" fill="#fff"/><circle cx="4.4" cy="12.3" r=".8" fill="none" stroke="#19bfc0" stroke-width=".6"/><circle cx="9.6" cy="12.3" r=".8" fill="none" stroke="#19bfc0" stroke-width=".6"/></svg>
<div class="t" style="left:1278.32px;top:521.00px;font-size:14.7px;color:#3a3d46;letter-spacing:0.186px;">Referrals</div>
<svg style="left:1681px;top:523.3px;" width="10" height="10" viewBox="0 0 10 10"><path d="M5 0 L5 10 M0 5 L10 5" stroke="#2a7bd4" stroke-width="1.2"/></svg>
<div class="a" style="left:1701.5px;top:521.3px;width:1.0px;height:14.0px;background:#dfe1e6"></div>
<svg style="left:1711.5px;top:521.8px;" width="14" height="13" viewBox="0 0 14 13"><path d="M5.5 1.8 L2 1.8 Q0.8 1.8 0.8 3 L0.8 11 Q0.8 12.2 2 12.2 L10 12.2 Q11.2 12.2 11.2 11 L11.2 7.5" stroke="#2a7bd4" stroke-width="1.25" fill="none"/>
      <path d="M7.5 0.8 L12.3 0.8 L12.3 5.6 M12.3 0.8 L6 7" stroke="#2a7bd4" stroke-width="1.25" fill="none"/></svg>
<div class="a" style="left:1247.7px;top:549.5px;width:482.89999999999986px;height:1.0px;background:#dcdfe4"></div>
<div class="a" style="left:1248.3px;top:560.4px;width:482.29999999999995px;height:225.39999999999998px;border:1px solid #cfd3dc;border-top:3px solid #19bfc0;border-radius:3px;background:#fff"></div>
<div class="t" style="left:1256.98px;top:577.00px;font-size:12.7px;color:#3a3d46;letter-spacing:0.091px;">RICHARD EMMETT, MD</div>
<div class="t" style="left:1257.07px;top:593.00px;font-size:11.6px;color:#7b7f88;letter-spacing:0.095px;">Referring Physician</div>
<svg style="left:1637.5px;top:583.5px;" width="12" height="12" viewBox="0 0 12 12"><path d="M0.8 3.6 L10.6 3.6 M8 1 L10.8 3.6 L8 6.2 M11 8.4 L1.2 8.4 M3.8 5.8 L1 8.4 L3.8 11" stroke="#2f6fe0" stroke-width="1.3" fill="none" stroke-linejoin="round"/></svg>
<div class="a" style="left:1659.5px;top:582px;width:1.0px;height:15px;background:#dfe1e6"></div>
<svg style="left:1669.5px;top:582.5px;" width="13" height="13" viewBox="0 0 13 13"><path d="M1.3 1.3 L11.5 1.3 L11.5 9 L5 9 L2.5 11.5 L2.5 9 L1.3 9 Z" stroke="#2f6fe0" stroke-width="1.2" fill="none" stroke-linejoin="round"/><path d="M3.5 4 L9.3 4 M3.5 6.3 L7.5 6.3" stroke="#2f6fe0" stroke-width="1"/></svg>
<div class="a" style="left:1675.5px;top:576.5px;width:9.0px;height:9.0px;background:#e02424;border-radius:50%"></div>
<div class="t" style="left:1677.38px;top:577.00px;font-size:7.5px;color:#fff;font-weight:700;">2</div>
<div class="a" style="left:1691.3px;top:582px;width:1.0px;height:15px;background:#dfe1e6"></div>
<svg style="left:1702.5px;top:583px;" width="11" height="13" viewBox="0 0 11 13"><path d="M0.5 2.5 L10 2.5 M3.5 2.3 L3.5 0.8 L7 0.8 L7 2.3" stroke="#e0403a" stroke-width="1.1" fill="none"/><path d="M1.5 3.5 L2.2 12 L8.3 12 L9 3.5 Z" stroke="#e0403a" stroke-width="1.2" fill="none"/><path d="M4 5 L4 10.5 M6.5 5 L6.5 10.5" stroke="#e0403a" stroke-width=".9"/></svg>
<div class="a" style="left:1258px;top:616px;width:462.29999999999995px;height:1px;background:#dcdfe4"></div>
<div class="a" style="left:1258.6px;top:626.6px;width:461.10000000000014px;height:149.39999999999998px;border:1px solid #d3d6dc;border-radius:3px;background:#fff"></div>
<div class="a" style="left:1259.6px;top:627.6px;width:459.10000000000014px;height:32.39999999999998px;background:#f3f4f6;border-bottom:1px solid #dcdfe4"></div>
<div class="t" style="left:1267.84px;top:637.00px;font-size:11.6px;color:#33363e;-webkit-text-stroke:0.35px #33363e;letter-spacing:0.054px;">Sunny Coast Physicians</div>
<div class="t" style="left:1268.30px;top:670.00px;font-size:10.2px;color:#8d9099;letter-spacing:0.098px;">Address</div>
<div class="t" style="left:1267.52px;top:685.00px;font-size:11.2px;color:#44474f;letter-spacing:-0.216px;">133 ALLIED DRIVE</div>
<div class="t" style="left:1267.86px;top:699.00px;font-size:10.9px;color:#44474f;letter-spacing:-0.197px;">SUITE 101</div>
<div class="t" style="left:1267.40px;top:713.00px;font-size:11.2px;color:#44474f;letter-spacing:-0.181px;">FORT LAUDERDALE, FL 33315</div>
<div class="t" style="left:1495.19px;top:670.00px;font-size:10.2px;color:#8d9099;letter-spacing:0.163px;">Office Phone</div>
<div class="t" style="left:1494.92px;top:685.00px;font-size:11.4px;color:#44474f;letter-spacing:0.310px;">(954) 519-0654</div>
<div class="t" style="left:1494.78px;top:704.00px;font-size:10.2px;color:#8d9099;letter-spacing:-0.043px;">Fax</div>
<div class="t" style="left:1494.92px;top:719.00px;font-size:11.4px;color:#44474f;letter-spacing:0.443px;">(206) 673-5892</div>
<div class="t" style="left:1494.78px;top:739.00px;font-size:10.2px;color:#8d9099;letter-spacing:0.454px;">NPI</div>
<div class="t" style="left:1495.03px;top:754.00px;font-size:11.4px;color:#44474f;letter-spacing:0.477px;">7833245062</div>
<div class="t" style="left:1611.38px;top:670.00px;font-size:10.2px;color:#8d9099;letter-spacing:0.133px;">Referring ID</div>
<div class="t" style="left:1611.20px;top:685.00px;font-size:11.1px;color:#44474f;letter-spacing:-0.187px;">IDS 1</div>
<div class="t" style="left:1611.69px;top:704.00px;font-size:10.2px;color:#8d9099;letter-spacing:0.138px;">Client Code</div>
<div class="t" style="left:1611.74px;top:719.00px;font-size:11.4px;color:#44474f;letter-spacing:2.354px;">--</div>
<div class="t" style="left:1612.00px;top:739.00px;font-size:10.2px;color:#8d9099;letter-spacing:0.065px;">Tax ID</div>
<div class="t" style="left:1611.74px;top:754.00px;font-size:11.4px;color:#44474f;letter-spacing:2.354px;">--</div>
<div class="a" style="left:1248px;top:814.6px;width:25px;height:25.0px;background:#3a2de0;border-radius:50%"></div>
<svg style="left:1254.8px;top:820.35px;" width="11.399999999999999" height="13.299999999999999" viewBox="0 0 11.399999999999999 13.299999999999999"><g transform="scale(0.95)"><rect x="1" y="2" width="10" height="11.5" rx="1.5" fill="#fff"/>
      <rect x="3.5" y="0.5" width="5" height="3" rx="1" fill="#fff" stroke="#3a2de0" stroke-width=".8"/>
      <g fill="#3a2de0"><rect x="3" y="6" width="1.2" height="1.2"/><rect x="5" y="6" width="4" height="1.2"/>
      <rect x="3" y="8.3" width="1.2" height="1.2"/><rect x="5" y="8.3" width="4" height="1.2"/>
      <rect x="3" y="10.6" width="1.2" height="1.2"/><rect x="5" y="10.6" width="4" height="1.2"/></g></g></svg>
<div class="t" style="left:1278.32px;top:820.00px;font-size:14.7px;color:#3a3d46;letter-spacing:0.283px;">Diagnosis</div>
<svg style="left:1681px;top:822.3px;" width="10" height="10" viewBox="0 0 10 10"><path d="M5 0 L5 10 M0 5 L10 5" stroke="#2a7bd4" stroke-width="1.2"/></svg>
<div class="a" style="left:1701.5px;top:820.3px;width:1.0px;height:14.0px;background:#dfe1e6"></div>
<svg style="left:1711.5px;top:820.8px;" width="14" height="13" viewBox="0 0 14 13"><path d="M5.5 1.8 L2 1.8 Q0.8 1.8 0.8 3 L0.8 11 Q0.8 12.2 2 12.2 L10 12.2 Q11.2 12.2 11.2 11 L11.2 7.5" stroke="#2a7bd4" stroke-width="1.25" fill="none"/>
      <path d="M7.5 0.8 L12.3 0.8 L12.3 5.6 M12.3 0.8 L6 7" stroke="#2a7bd4" stroke-width="1.25" fill="none"/></svg>
<div class="a" style="left:1248px;top:846px;width:482.5px;height:1px;background:#dcdfe4"></div>
<div class="a" style="left:1248px;top:857px;width:482.5px;height:91.5px;border:1px solid #cfd3dc;border-top:3px solid #3a2ee0;border-radius:3px;background:#fff"></div>
<div class="a" style="left:1249px;top:860px;width:470px;height:37.5px;background:#f4f5f7;border-bottom:1px solid #dcdfe4"></div>
<div class="a" style="left:1423.4px;top:860px;width:1.0px;height:37.299999999999955px;background:#e0e2e7"></div>
<div class="a" style="left:1504.2px;top:860px;width:1.0px;height:37.299999999999955px;background:#e0e2e7"></div>
<div class="a" style="left:1606px;top:860px;width:1px;height:88px;background:#dcdfe4"></div>
<div class="t" style="left:1254.26px;top:872.00px;font-size:11.7px;color:#6b6f78;letter-spacing:0.126px;">Diagnosis</div>
<svg style="left:1398.2px;top:870.8px;" width="12" height="17" viewBox="0 0 12 17"><path d="M1 6.3 L5.8 1.2 L10.6 6.3 M1 10.7 L5.8 15.8 L10.6 10.7" stroke="#7b7f88" stroke-width="1.5" fill="none" stroke-linejoin="round" stroke-linecap="round"/></svg>
<div class="t" style="left:1435.51px;top:872.00px;font-size:11.7px;color:#6b6f78;letter-spacing:0.313px;">Code</div>
<svg style="left:1479px;top:870.8px;" width="12" height="17" viewBox="0 0 12 17"><path d="M1 6.3 L5.8 1.2 L10.6 6.3 M1 10.7 L5.8 15.8 L10.6 10.7" stroke="#7b7f88" stroke-width="1.5" fill="none" stroke-linejoin="round" stroke-linecap="round"/></svg>
<div class="t" style="left:1517.50px;top:872.00px;font-size:11.7px;color:#6b6f78;letter-spacing:0.196px;">Attached</div>
<svg style="left:1581px;top:870.8px;" width="12" height="17" viewBox="0 0 12 17"><path d="M1 6.3 L5.8 1.2 L10.6 6.3 M1 10.7 L5.8 15.8 L10.6 10.7" stroke="#7b7f88" stroke-width="1.5" fill="none" stroke-linejoin="round" stroke-linecap="round"/></svg>
<div class="t" style="left:1644.20px;top:872.00px;font-size:11.7px;color:#6b6f78;letter-spacing:0.147px;">Actions</div>
<div class="t" style="left:1266.66px;top:917.00px;font-size:11.7px;color:#44474f;letter-spacing:0.483px;">Low back pain</div>
<div class="t" style="left:1434.96px;top:917.00px;font-size:11.7px;color:#44474f;letter-spacing:0.560px;">M54.5</div>
<svg style="left:1548.5px;top:916px;" width="14" height="10" viewBox="0 0 14 10"><path d="M5.5 2.5 L3.5 2.5 Q0.8 2.5 0.8 5 Q0.8 7.5 3.5 7.5 L5.5 7.5 M8.5 2.5 L10.5 2.5 Q13.2 2.5 13.2 5 Q13.2 7.5 10.5 7.5 L8.5 7.5 M4.5 5 L9.5 5" stroke="#8a8d95" stroke-width="1.2" fill="none" transform="rotate(-30 7 5)"/></svg>
<div class="a" style="left:1625.3px;top:910.6px;width:25.200000000000045px;height:24.0px;background:#f5f6f8;border-radius:50%;box-shadow:0 1px 2px rgba(0,0,0,.16)"></div>
<div class="a" style="left:1656.6px;top:910.6px;width:25.200000000000045px;height:24.0px;background:#f5f6f8;border-radius:50%;box-shadow:0 1px 2px rgba(0,0,0,.16)"></div>
<svg style="left:1632px;top:916.5px;" width="12" height="12" viewBox="0 0 12 12"><path d="M1.2 10.8 L1.8 8 L8.5 1.3 L10.7 3.5 L4 10.2 Z" stroke="#4f535c" stroke-width="1.3" fill="none" stroke-linejoin="round"/></svg>
<svg style="left:1664px;top:916.5px;" width="11" height="13" viewBox="0 0 11 13"><path d="M0.5 2.5 L10 2.5 M3.5 2.3 L3.5 0.8 L7 0.8 L7 2.3" stroke="#e0403a" stroke-width="1.1" fill="none"/><path d="M1.5 3.5 L2.2 12 L8.3 12 L9 3.5 Z" stroke="#e0403a" stroke-width="1.2" fill="none"/><path d="M4 5 L4 10.5 M6.5 5 L6.5 10.5" stroke="#e0403a" stroke-width=".9"/></svg>
<div class="a" style="left:1248px;top:976.3px;width:25px;height:25.0px;background:#19bfc0;border-radius:50%"></div>
<svg style="left:1252.5px;top:981px;" width="16" height="15" viewBox="0 0 16 15"><path d="M8 1 L8 13 M3 3 L13 3 M4.5 13.5 L11.5 13.5" stroke="#fff" stroke-width="1.3"/><path d="M3 3 L0.8 8 L5.2 8 Z M13 3 L10.8 8 L15.2 8 Z" stroke="#fff" stroke-width="1" fill="#fff"/></svg>
<div class="t" style="left:1278.77px;top:982.00px;font-size:14.7px;color:#3a3d46;letter-spacing:0.027px;">Cases</div>
<svg style="left:1681px;top:984px;" width="10" height="10" viewBox="0 0 10 10"><path d="M5 0 L5 10 M0 5 L10 5" stroke="#2a7bd4" stroke-width="1.2"/></svg>
<div class="a" style="left:1701.5px;top:982px;width:1.0px;height:14px;background:#dfe1e6"></div>
<svg style="left:1711.5px;top:982.5px;" width="14" height="13" viewBox="0 0 14 13"><path d="M5.5 1.8 L2 1.8 Q0.8 1.8 0.8 3 L0.8 11 Q0.8 12.2 2 12.2 L10 12.2 Q11.2 12.2 11.2 11 L11.2 7.5" stroke="#2a7bd4" stroke-width="1.25" fill="none"/>
      <path d="M7.5 0.8 L12.3 0.8 L12.3 5.6 M12.3 0.8 L6 7" stroke="#2a7bd4" stroke-width="1.25" fill="none"/></svg>
<svg style="left:1763px;top:159.3px;" width="217" height="136" viewBox="0 0 217 136">
    <defs>
      <linearGradient id="cg" x1="0" y1="0" x2="1" y2="1">
        <stop offset="0" stop-color="#f5f2ee"/><stop offset="0.45" stop-color="#f5ebea"/>
        <stop offset="0.75" stop-color="#f1f3ea"/><stop offset="1" stop-color="#e9eff5"/>
      </linearGradient>
      <linearGradient id="hg" x1="0" y1="0" x2="1" y2="0">
        <stop offset="0" stop-color="#f2ecda"/><stop offset="1" stop-color="#f4efdc"/>
      </linearGradient>
      <radialGradient id="face" cx="0.5" cy="0.45" r="0.55">
        <stop offset="0" stop-color="#d6a38a"/><stop offset="1" stop-color="#b07a64"/>
      </radialGradient>
      <clipPath id="cc"><rect x="0" y="0" width="217" height="136" rx="6"/></clipPath>
    </defs>
    <g clip-path="url(#cc)">
      <rect x="0" y="0" width="217" height="136" fill="url(#cg)"/>
      <rect x="0" y="0" width="217" height="18.5" fill="url(#hg)"/>
      <rect x="0" y="18" width="217" height="0.8" fill="#a9acb4"/>
      <path d="M120 60 L140 30 L150 40 L165 22 L185 45 L200 35 L217 55 L217 80 L120 80 Z" fill="#e3e8ee" opacity=".65"/>
      <path d="M150 40 L165 22 L175 33 L170 36 L160 30 Z" fill="#cdd6e0" opacity=".8"/>
      <path d="M140 70 Q150 40 160 70 Z M165 75 Q175 45 185 75 Z" fill="#e2e6cf" opacity=".8"/>
      <ellipse cx="115" cy="55" rx="35" ry="25" fill="#f2e2e2" opacity=".45"/>
      <ellipse cx="195" cy="110" rx="40" ry="28" fill="#e1e8f0" opacity=".8"/>
      <circle cx="14" cy="14" r="7" fill="#dde5ee" opacity=".5"/>
      <text x="20.5" y="17.7" font-family="Liberation Serif" font-weight="700" font-size="14.2" fill="#1e2a55" textLength="92.5" lengthAdjust="spacingAndGlyphs">CALIFORNIA</text>
      <text x="126.5" y="11.7" font-family="Liberation Sans" font-weight="700" font-size="5.6" fill="#3b9a5a" textLength="56" lengthAdjust="spacingAndGlyphs">IDENTIFICATION</text>
      <text x="145" y="17.7" font-family="Liberation Sans" font-weight="700" font-size="5.6" fill="#3b9a5a" textLength="20" lengthAdjust="spacingAndGlyphs">CARD</text>
      <rect x="9" y="23.6" width="63" height="84.7" fill="#45abc8"/>
      <path d="M9 108.3 L9 96 Q18 88 30 85 L54 85 Q66 88 72 95 L72 108.3 Z" fill="#5d6a58"/>
      <path d="M38 108.3 L42 96 L47 108.3 Z" fill="#d8d8d0" opacity=".7"/>
      <ellipse cx="42" cy="50" rx="27" ry="26" fill="#1d1716"/>
      <ellipse cx="42.5" cy="63.5" rx="20.5" ry="25.5" fill="url(#face)"/>
      <path d="M20 50 Q24 38 42 38.5 Q58 38 64 50 Q62 40 55 36 Q42 31 30 36 Q22 40 20 50 Z" fill="#1d1716"/>
      <ellipse cx="33" cy="60.5" rx="3.6" ry="1.5" fill="#4a3028"/><ellipse cx="52" cy="60.5" rx="3.6" ry="1.5" fill="#4a3028"/>
      <path d="M34 79 Q42.5 84 51.5 79" stroke="#f0dcd2" stroke-width="2.2" fill="none"/>
      <path d="M41 62 L40 72 L45 72" stroke="#a06850" stroke-width="1" fill="none" opacity=".6"/>
      <text x="28" y="104" font-family="Liberation Sans" font-size="9" fill="#d8d8d0" opacity=".8" textLength="38" lengthAdjust="spacingAndGlyphs">083177</text>
      <text x="78" y="33" font-family="Liberation Sans" font-weight="700" font-size="4" fill="#445">ID</text>
      <text x="86.5" y="33.4" font-family="Liberation Sans" font-size="8.5" fill="#b8343a" textLength="41" lengthAdjust="spacingAndGlyphs">I1234561</text>
      <text x="78" y="49" font-family="Liberation Sans" font-weight="700" font-size="4" fill="#445">EXP</text>
      <text x="90" y="49.2" font-family="Liberation Sans" font-weight="700" font-size="6.5" fill="#c8504a" textLength="40" lengthAdjust="spacingAndGlyphs">08/31/2015</text>
      <text x="78" y="58.3" font-family="Liberation Sans" font-weight="700" font-size="4" fill="#445">LN</text>
      <text x="86" y="58.5" font-family="Liberation Sans" font-weight="700" font-size="6.2" fill="#2a2c3a" textLength="29" lengthAdjust="spacingAndGlyphs">SAMPLE</text>
      <text x="78" y="65.6" font-family="Liberation Sans" font-weight="700" font-size="4" fill="#445">FN</text>
      <text x="86" y="65.8" font-family="Liberation Sans" font-weight="700" font-size="6.2" fill="#2a2c3a">SEIJI</text>
      <text x="77" y="72.5" font-family="Liberation Sans" font-weight="700" font-size="4.2" fill="#2a2c3a" textLength="48" lengthAdjust="spacingAndGlyphs">2570 24TH STREET</text>
      <text x="77" y="78" font-family="Liberation Sans" font-weight="700" font-size="4.2" fill="#2a2c3a" textLength="64" lengthAdjust="spacingAndGlyphs">SACRAMENTO, CA 95818</text>
      <text x="77" y="86.7" font-family="Liberation Sans" font-weight="700" font-size="4" fill="#445">DOB</text>
      <text x="90" y="86.9" font-family="Liberation Sans" font-weight="700" font-size="6.5" fill="#c8504a" textLength="40" lengthAdjust="spacingAndGlyphs">08/31/1977</text>
      <circle cx="82.5" cy="101.5" r="5.2" fill="#e07f74"/>
      <rect x="134" y="75.5" width="32" height="42" fill="#d6cdc8" opacity=".7"/>
      <ellipse cx="150" cy="84" rx="11.5" ry="9" fill="#8d8078" opacity=".75"/>
      <ellipse cx="150" cy="96" rx="9.5" ry="13" fill="#b8a8a0" opacity=".85"/>
      <path d="M139 90 Q139 80 150 79 Q161 80 161 90 Q157 84 150 84 Q143 84 139 90 Z" fill="#7d706a" opacity=".8"/>
      <path d="M136 117.5 Q140 108 150 108 Q160 108 165 117.5 Z" fill="#a09690" opacity=".6"/>
      <text x="142" y="101" font-family="Liberation Sans" font-size="3.5" fill="#7c7f88" transform="translate(40 -28)">08311977</text>
      <g font-family="Liberation Sans" font-weight="700" font-size="3.8" fill="#4a4e6a">
        <text x="102" y="117">SEX  M</text><text x="136" y="117">HAIR  BLK</text><text x="172" y="117">EYES  BRN</text>
        <text x="102" y="123.5">HGT  5'-08"</text><text x="136" y="123.5">WGT  150 lb</text>
        <text x="102" y="131">DD  00/00/0000NNNAN/ANFD/YY</text><text x="180" y="131">08/30/2010</text>
      </g>
      <path d="M12 118 Q14 112 19 114 Q14 116 15 121 Q20 122 23 117 Q25 121 28 118 Q31 115 33 120 M38 119 Q41 112 46 115 Q42 118 44 121 Q48 121 50 117 Q52 121 55 118 Q57 115 58 119 Q61 114 62 120" stroke="#5a5a5a" stroke-width=".6" fill="none"/><text x="16" y="105" font-family="Liberation Sans" font-weight="700" font-size="4.5" fill="#e8f0f0" opacity=".8" transform="rotate(-90 16 105)">L4 SAMPLE</text>
    </g>
    </svg>
<div class="a" style="left:1764.2px;top:310.9px;width:25.200000000000045px;height:25.100000000000023px;background:#f7a21b;border-radius:50%"></div>
<svg style="left:1770.5px;top:316px;" width="13" height="14" viewBox="0 0 13 14"><circle cx="6.5" cy="4" r="3.6" fill="#fff"/><path d="M0.5 13.5 Q0.5 8.5 6.5 8.3 Q12.5 8.5 12.5 13.5 Z" fill="#fff"/></svg>
<div class="a" style="left:1763.5px;top:351.2px;width:26.200000000000045px;height:26.19999999999999px;border:1px solid #5f636c;border-radius:50%;background:#fff"></div>
<svg style="left:1768.5px;top:356.7px;" width="16" height="15" viewBox="0 0 16 15"><path d="M3.5 6.5 Q4.5 2.5 8.5 2.3 Q13 2.5 13.5 7 Q13.5 11.5 8.5 12 Q5.3 12 4 9.5" stroke="#6a6e77" stroke-width="1.4" fill="none"/><path d="M2 4.5 L3.5 7 L6 5.5" stroke="#6a6e77" stroke-width="1.3" fill="none"/><path d="M8.5 5 L8.5 7.7 L10.5 9" stroke="#6a6e77" stroke-width="1.3" fill="none"/></svg>
<div class="a" style="left:1763.5px;top:392px;width:26.200000000000045px;height:26.19999999999999px;border:1px solid #5f636c;border-radius:50%;background:#fff"></div>
<svg style="left:1768.5px;top:397.5px;" width="16" height="15" viewBox="0 0 16 15"><path d="M2 3 L3 4 L4.8 2 M2 7.2 L3 8.2 L4.8 6.2" stroke="#6a6e77" stroke-width="1" fill="none"/><circle cx="3.2" cy="11.5" r="1" fill="#6a6e77"/><path d="M6.5 3.2 L14 3.2 M6.5 7.4 L14 7.4 M6.5 11.5 L14 11.5" stroke="#6a6e77" stroke-width="1.6"/></svg>
<div class="a" style="left:1763.5px;top:432.5px;width:26.200000000000045px;height:26.19999999999999px;border:1px solid #5f636c;border-radius:50%;background:#fff"></div>
<svg style="left:1768.5px;top:438.0px;" width="16" height="15" viewBox="0 0 16 15"><path d="M6 2 Q11 2 11 5.5 Q11 9 6 9 L5 9 L2.5 10.5 L3 8.3 Q1 7.3 1 5.5 Q1 2 6 2 Z" fill="#6a6e77"/><path d="M11.5 6 Q15.5 6.5 15.5 9.5 Q15.5 11.3 14 12 L14.5 13.5 L12.3 12.5 Q8.3 12.5 7.8 10 Q10.8 9.5 11.5 6 Z" fill="#6a6e77" stroke="#fff" stroke-width=".5"/></svg>
<div class="a" style="left:1798.5px;top:342px;width:1.0px;height:658.5px;background:#dfe2e8"></div>
<div class="a" style="left:1796px;top:304.7px;width:3px;height:37.30000000000001px;background:#1f6fe0;border-radius:1px"></div>
<div class="t" style="left:1805.02px;top:307.00px;font-size:11px;color:#2f6fe0;letter-spacing:-0.053px;">KEVIN RUSSELL</div>
<div class="t" style="left:1804.99px;top:323.00px;font-size:11.4px;color:#5b5f68;letter-spacing:0.459px;">Patient Info</div>
<svg style="left:1965.5px;top:315.5px;" width="4" height="10" viewBox="0 0 4 10"><circle cx="1.6" cy="1.2" r="1.1" fill="#2f5fd0"/><circle cx="1.6" cy="4.7" r="1.1" fill="#2f5fd0"/><circle cx="1.6" cy="8.2" r="1.1" fill="#2f5fd0"/></svg>
<div class="a" style="left:1805.9px;top:341px;width:173.5px;height:1px;background:#dfe2e8"></div>
<div class="t" style="left:1805.08px;top:361.00px;font-size:10.2px;color:#868a93;letter-spacing:-0.088px;">MRN</div>
<div class="t" style="left:1898.40px;top:361.00px;font-size:10.2px;color:#868a93;letter-spacing:0.071px;">Active Ext. IDs</div>
<div class="t" style="left:1804.98px;top:376.00px;font-size:10.2px;color:#44474f;-webkit-text-stroke:0.15px #44474f;letter-spacing:0.349px;">IDS5046</div>
<div class="t" style="left:1805.08px;top:395.00px;font-size:10.2px;color:#868a93;letter-spacing:-0.004px;">DOB</div>
<div class="t" style="left:1898.40px;top:395.00px;font-size:10.2px;color:#868a93;letter-spacing:0.110px;">Age</div>
<div class="t" style="left:1805.59px;top:410.00px;font-size:10.2px;color:#44474f;-webkit-text-stroke:0.15px #44474f;letter-spacing:0.225px;">03/26/1961</div>
<div class="t" style="left:1897.89px;top:410.00px;font-size:10.2px;color:#44474f;-webkit-text-stroke:0.15px #44474f;letter-spacing:1.533px;">63</div>
<div class="t" style="left:1805.49px;top:429.00px;font-size:10.2px;color:#868a93;letter-spacing:0.217px;">Sex</div>
<div class="t" style="left:1897.99px;top:429.00px;font-size:10.2px;color:#868a93;letter-spacing:0.188px;">Social Security #</div>
<div class="t" style="left:1805.08px;top:444.00px;font-size:10.2px;color:#44474f;-webkit-text-stroke:0.15px #44474f;letter-spacing:0.425px;">Male</div>
<div class="t" style="left:1805.08px;top:464.00px;font-size:10.2px;color:#868a93;letter-spacing:0.143px;">Language</div>
<div class="t" style="left:1898.20px;top:464.00px;font-size:10.2px;color:#868a93;letter-spacing:0.156px;">Translator</div>
<div class="t" style="left:1805.49px;top:478.00px;font-size:10.2px;color:#44474f;-webkit-text-stroke:0.15px #44474f;letter-spacing:2.053px;">--</div>
<div class="t" style="left:1897.58px;top:478.00px;font-size:10.2px;color:#44474f;-webkit-text-stroke:0.15px #44474f;letter-spacing:0.946px;">No</div>
<div class="t" style="left:1805.32px;top:513.00px;font-size:11.6px;color:#3a3d46;letter-spacing:0.400px;">Contact Information</div>
<div class="a" style="left:1805.9px;top:528.5px;width:183.0999999999999px;height:1.0px;background:#dfe2e8"></div>
<div class="t" style="left:1805.08px;top:537.00px;font-size:10.2px;color:#868a93;letter-spacing:0.152px;">Home #</div>
<div class="t" style="left:1897.89px;top:537.00px;font-size:10.2px;color:#868a93;letter-spacing:0.079px;">Cell #</div>
<div class="t" style="left:1805.29px;top:552.00px;font-size:10.2px;color:#44474f;-webkit-text-stroke:0.15px #44474f;letter-spacing:0.325px;">(305) 555-0149</div>
<div class="t" style="left:1805.90px;top:571.00px;font-size:10.2px;color:#868a93;letter-spacing:0.047px;">Work Phone #</div>
<div class="t" style="left:1805.90px;top:606.00px;font-size:10.2px;color:#868a93;letter-spacing:0.215px;">Address</div>
<div class="t" style="left:1805.49px;top:620.00px;font-size:10.2px;color:#44474f;-webkit-text-stroke:0.15px #44474f;letter-spacing:-0.157px;">9556 PARK AVE NE</div>
<div class="t" style="left:1805.08px;top:648.00px;font-size:10.2px;color:#44474f;-webkit-text-stroke:0.15px #44474f;letter-spacing:-0.180px;">FORT LAUDERDALE, FL 33309</div>
<div class="t" style="left:1805.08px;top:668.00px;font-size:10.2px;color:#868a93;letter-spacing:0.136px;">Email</div>
<div class="t" style="left:1805.29px;top:683.00px;font-size:10.2px;color:#44474f;-webkit-text-stroke:0.15px #44474f;letter-spacing:0.185px;">krussell@email.com</div>
<div class="t" style="left:1804.97px;top:711.00px;font-size:11.6px;color:#3a3d46;letter-spacing:0.375px;">Primary Contacts</div>
<div class="a" style="left:1805.9px;top:727px;width:183.0999999999999px;height:1px;background:#dfe2e8"></div>
<div class="a" style="left:1805.9px;top:734px;width:183.0999999999999px;height:90.20000000000005px;background:#f1f2f4;border-top:3px solid #676a73;border-radius:3px 0 0 3px"></div>
<div class="a" style="left:1815.1px;top:755.8px;width:50.90000000000009px;height:51.30000000000007px;background:#a9b0b8;border-radius:50%"></div>
<svg style="left:1829px;top:768px;" width="24" height="26" viewBox="0 0 24 26"><rect x="1" y="1" width="17" height="23" rx="2.5" stroke="#fff" stroke-width="1.6" fill="none"/><circle cx="9.5" cy="9.5" r="3" stroke="#fff" stroke-width="1.5" fill="none"/><path d="M4.5 19 Q5 14.5 9.5 14.3 Q14 14.5 14.5 19" stroke="#fff" stroke-width="1.5" fill="none"/><path d="M21 5 L21 8 M21 11 L21 14 M21 17 L21 20" stroke="#fff" stroke-width="1.6"/></svg>
<div class="t" style="left:1871.68px;top:751.00px;font-size:12.7px;color:#3a3d46;letter-spacing:0.764px;">No contacts</div>
<div class="t" style="left:1872.19px;top:769.00px;font-size:12.7px;color:#3a3d46;letter-spacing:0.976px;">added</div>
<div class="a" style="left:1872.4px;top:793.4px;width:105.0px;height:22.0px;border:1px solid #2f6fe0;border-radius:3px;background:#fff"></div>
<div class="t" style="left:1885.54px;top:798.00px;font-size:11.6px;color:#2f6fe0;letter-spacing:0.400px;">+ Add Contact</div>
</body></html>
